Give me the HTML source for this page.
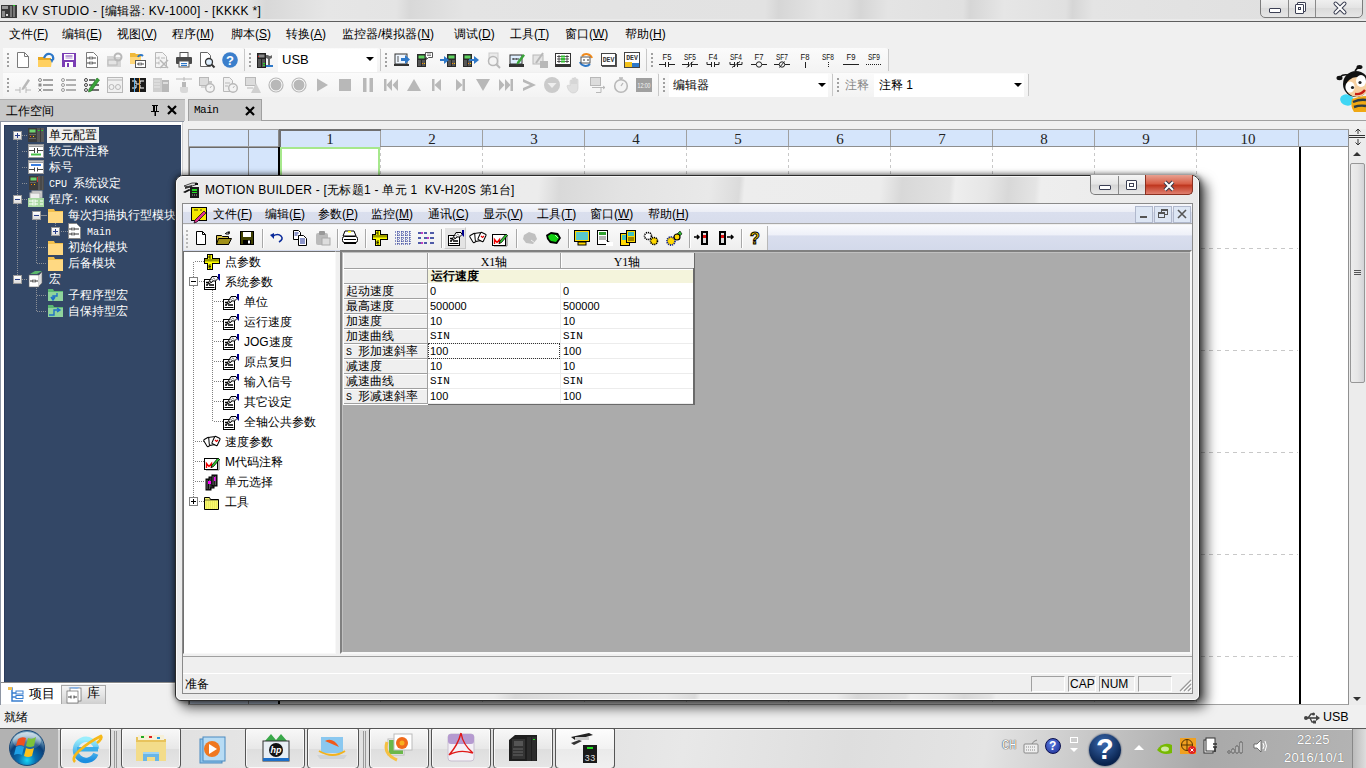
<!DOCTYPE html>
<html><head><meta charset="utf-8">
<style>
*{box-sizing:border-box;margin:0;padding:0}
html,body{width:1366px;height:768px;overflow:hidden;background:#f0f0f0;font-family:"Liberation Sans",sans-serif;font-size:12px;color:#000}
body{position:relative}
.a{position:absolute}
.t{position:absolute;white-space:nowrap;line-height:1}
svg{overflow:visible}
u{text-decoration:underline;text-underline-offset:1px}
m{font-family:'Liberation Mono',monospace;font-size:10px}
</style></head><body>

<div class="a" style="left:0;top:0;width:1366px;height:21px;background:linear-gradient(92deg,#e2e2e2 0%,#e6e6e6 18%,#d8d8d8 19.5%,#e6e6e6 24%,#e4e4e4 29%,#d8d8d8 30%,#e4e4e4 34%,#e2e2e2 56%,#d6d6d6 57%,#e4e4e4 60%,#e0e0e0 62%,#d6d6d6 63%,#e4e4e4 65%,#e0e0e0 70.5%,#d6d6d6 71%,#e6e6e6 73.5%,#e0e0e0 78%,#d6d6d6 78.5%,#e4e4e4 80%,#dedede 100%)"></div>
<div class="a" style="left:0;top:19px;width:1366px;height:2px;background:#eaeaea"></div>
<div class="a" style="left:0;top:21px;width:1366px;height:1px;background:#5e5e5e"></div>
<svg class="a" style="left:1px;top:3px" width="16" height="16" viewBox="0 0 16 16">
<rect x="0" y="2" width="16" height="13" fill="#3a3a3a"/>
<rect x="1" y="3" width="6" height="3" fill="#9a9a9a"/><rect x="1" y="8" width="3" height="6" fill="#8a8a8a"/>
<rect x="9" y="3" width="2" height="11" fill="#777"/><rect x="12" y="3" width="2" height="11" fill="#777"/>
<rect x="12" y="2" width="2" height="1" fill="#2c2"/><rect x="5" y="11" width="2" height="2" fill="#ddd"/></svg>
<div class="t" style="left:22px;top:5px;font-size:12px;color:#000;letter-spacing:.3px">KV STUDIO - [编辑器: KV-1000] - [KKKK *]</div>
<div class="a" style="left:1260px;top:-3px;width:103px;height:21px;border:1px solid #7c7c7c;border-radius:0 0 5px 5px;background:linear-gradient(#f2f2f2,#e4e4e4 50%,#dadada 51%,#e6e6e6)"></div>
<div class="a" style="left:1288px;top:0;width:1px;height:17px;background:#8a8a8a"></div>
<div class="a" style="left:1315px;top:0;width:1px;height:17px;background:#8a8a8a"></div>
<div class="a" style="left:1269px;top:8px;width:12px;height:5px;border:1px solid #3c4054;border-radius:1px;background:#fff"></div>
<div class="a" style="left:1297px;top:2px;width:9px;height:10px;border:1px solid #3c4054;border-radius:1px;background:#fff"></div>
<div class="a" style="left:1295px;top:4px;width:9px;height:10px;border:1px solid #3c4054;border-radius:1px;background:#fff"></div>
<div class="a" style="left:1298px;top:7px;width:3px;height:3px;border:1px solid #3c4054"></div>
<svg class="a" style="left:1333px;top:2px" width="14" height="12" viewBox="0 0 14 12"><path d="M2.5 1.5l9 9M11.5 1.5l-9 9" stroke="#3c4054" stroke-width="4" stroke-linecap="round"/><path d="M2.5 1.5l9 9M11.5 1.5l-9 9" stroke="#fff" stroke-width="2" stroke-linecap="round"/></svg>
<div class="t" style="left:9px;top:28px;font-size:12px">文件(<u>F</u>)</div>
<div class="t" style="left:62px;top:28px;font-size:12px">编辑(<u>E</u>)</div>
<div class="t" style="left:117px;top:28px;font-size:12px">视图(<u>V</u>)</div>
<div class="t" style="left:172px;top:28px;font-size:12px">程序(<u>M</u>)</div>
<div class="t" style="left:231px;top:28px;font-size:12px">脚本(<u>S</u>)</div>
<div class="t" style="left:286px;top:28px;font-size:12px">转换(<u>A</u>)</div>
<div class="t" style="left:342px;top:28px;font-size:12px">监控器/模拟器(<u>N</u>)</div>
<div class="t" style="left:454px;top:28px;font-size:12px">调试(<u>D</u>)</div>
<div class="t" style="left:510px;top:28px;font-size:12px">工具(<u>T</u>)</div>
<div class="t" style="left:565px;top:28px;font-size:12px">窗口(<u>W</u>)</div>
<div class="t" style="left:625px;top:28px;font-size:12px">帮助(<u>H</u>)</div>
<div class="a" style="left:3px;top:48px;width:241px;height:24px;background:linear-gradient(#fbfbfb,#f3f3f3);border-radius:0 3px 3px 0"></div>
<div class="a" style="left:7px;top:53px;width:2px;height:2px;background:#a0a0a0"></div>
<div class="a" style="left:7px;top:57px;width:2px;height:2px;background:#a0a0a0"></div>
<div class="a" style="left:7px;top:61px;width:2px;height:2px;background:#a0a0a0"></div>
<div class="a" style="left:7px;top:65px;width:2px;height:2px;background:#a0a0a0"></div>
<div class="a" style="left:244px;top:49px;width:1px;height:22px;background:#c8c8c8"></div>
<svg class="a" style="left:15px;top:52px" width="16" height="16" viewBox="0 0 16 16"><path d="M2.5 0.5h7l4 4v11h-11z" fill="#fff" stroke="#7a7a7a"/><path d="M9.5 0.5v4h4" fill="none" stroke="#7a7a7a"/></svg>
<svg class="a" style="left:38px;top:52px" width="16" height="16" viewBox="0 0 16 16"><path d="M0 5h6l1 1h6v9H0z" fill="#e8a820"/><path d="M0 8h14l-1 7H0z" fill="#ffd060"/><path d="M6 6q2-5 6-4t3 6" stroke="#2e78c8" stroke-width="2.2" fill="none"/><path d="M12 7h4l-2 4z" fill="#2e78c8"/></svg>
<svg class="a" style="left:61px;top:52px" width="16" height="16" viewBox="0 0 16 16"><rect x="1" y="1" width="14" height="14" fill="#7a3db4"/><rect x="3" y="2" width="10" height="6" fill="#fff"/><rect x="4.5" y="3.5" width="7" height="1" fill="#7a3db4"/><rect x="4.5" y="5.5" width="7" height="1" fill="#b090d0"/><rect x="4" y="10" width="8" height="5" fill="#fff"/><rect x="6" y="11" width="2" height="4" fill="#7a3db4"/></svg>
<svg class="a" style="left:84px;top:52px" width="16" height="16" viewBox="0 0 16 16"><path d="M2.5 0.5h7l4 4v11h-11z" fill="#fff" stroke="#7a7a7a"/><path d="M3 6h3M8 6h4M3 11h3M8 11h4M6 4.5v3M8 4.5v3M6 9.5v3M8 9.5v3" stroke="#444" fill="none"/></svg>
<svg class="a" style="left:107px;top:52px" width="16" height="16" viewBox="0 0 16 16"><path d="M0 4h6l1 1h7v10H0z" fill="#d6d6d6"/><rect x="1" y="8" width="9" height="5" fill="#e4e4e4" stroke="#b8b8b8"/><circle cx="11" cy="5" r="3.5" fill="none" stroke="#b8b8b8" stroke-width="2"/></svg>
<svg class="a" style="left:130px;top:52px" width="16" height="16" viewBox="0 0 16 16"><path d="M0 1h5l1 1h5v10H0z" fill="#f0b93a"/><path d="M0 5h11v7H0z" fill="#ffd77a"/><rect x="5.5" y="8.5" width="10" height="7" fill="#fff" stroke="#555"/><path d="M7 12h2M11 12h3M9 10.5v3M11 10.5v3" stroke="#444"/><path d="M8 5a3 3 0 0 1 5-1" stroke="#2e78c8" stroke-width="2" fill="none"/></svg>
<svg class="a" style="left:153px;top:52px" width="16" height="16" viewBox="0 0 16 16"><path d="M2.5 0.5h7l4 4v11h-11z" fill="#f4f4f4" stroke="#b8b8b8"/><path d="M3 6h3M8 6h4M3 11h3M6 4.5v3M6 9.5v3" stroke="#b8b8b8"/><path d="M7 8l8 8M15 8l-8 8" stroke="#b8b8b8" stroke-width="1.5"/></svg>
<svg class="a" style="left:176px;top:52px" width="16" height="16" viewBox="0 0 16 16"><rect x="4" y="0.5" width="8" height="5" fill="#fff" stroke="#555"/><rect x="0" y="5" width="16" height="7" rx="1" fill="#4a4a4a"/><rect x="3" y="9" width="10" height="6" fill="#fff" stroke="#555"/><rect x="5" y="11" width="6" height="1.2" fill="#2e78c8"/><rect x="5" y="13" width="6" height="1" fill="#2e78c8"/></svg>
<svg class="a" style="left:199px;top:52px" width="16" height="16" viewBox="0 0 16 16"><path d="M1.5 0.5h7l3 3v11h-10z" fill="#fff" stroke="#666"/><circle cx="10" cy="10" r="3.5" fill="#dff0ff" stroke="#333" stroke-width="1.3"/><path d="M12.5 12.5l3 3" stroke="#333" stroke-width="2"/></svg>
<svg class="a" style="left:222px;top:52px" width="16" height="16" viewBox="0 0 16 16"><circle cx="8" cy="8" r="7.8" fill="#3b7fcc"/><text x="8" y="13" font-size="13" font-weight="bold" fill="#fff" text-anchor="middle" font-family="Liberation Sans">?</text></svg>
<div class="a" style="left:245px;top:48px;width:135px;height:24px;background:linear-gradient(#fbfbfb,#f3f3f3);border-radius:0 3px 3px 0"></div>
<div class="a" style="left:249px;top:53px;width:2px;height:2px;background:#a0a0a0"></div>
<div class="a" style="left:249px;top:57px;width:2px;height:2px;background:#a0a0a0"></div>
<div class="a" style="left:249px;top:61px;width:2px;height:2px;background:#a0a0a0"></div>
<div class="a" style="left:249px;top:65px;width:2px;height:2px;background:#a0a0a0"></div>
<div class="a" style="left:380px;top:49px;width:1px;height:22px;background:#c8c8c8"></div>
<svg class="a" style="left:257px;top:52px" width="16" height="16" viewBox="0 0 16 16"><rect x="0" y="1" width="9" height="15" fill="#222"/><rect x="1.5" y="2.5" width="6" height="3" fill="#888"/><rect x="1" y="4" width="1" height="1" fill="#e22"/><rect x="1" y="7" width="3" height="8" fill="#555"/><rect x="5" y="7" width="3" height="8" fill="#555"/><rect x="6" y="11" width="2" height="1" fill="#2d2"/><rect x="6" y="13" width="2" height="1" fill="#2d2"/><path d="M11 3a3 3 0 0 0 4 0v3l-2 1v7h-2V7l-2-1V3z" fill="#666"/><rect x="9" y="13" width="7" height="2" fill="#2e78c8"/></svg>
<div class="a" style="left:278px;top:49px;width:99px;height:23px;background:#fff"></div>
<div class="t" style="left:282px;top:53px;font-size:13px">USB</div>
<div class="a" style="left:366px;top:57px;width:0;height:0;border-left:4px solid transparent;border-right:4px solid transparent;border-top:4px solid #000"></div>
<div class="a" style="left:381px;top:48px;width:265px;height:24px;background:linear-gradient(#fbfbfb,#f3f3f3);border-radius:0 3px 3px 0"></div>
<div class="a" style="left:385px;top:53px;width:2px;height:2px;background:#a0a0a0"></div>
<div class="a" style="left:385px;top:57px;width:2px;height:2px;background:#a0a0a0"></div>
<div class="a" style="left:385px;top:61px;width:2px;height:2px;background:#a0a0a0"></div>
<div class="a" style="left:385px;top:65px;width:2px;height:2px;background:#a0a0a0"></div>
<div class="a" style="left:646px;top:49px;width:1px;height:22px;background:#c8c8c8"></div>
<svg class="a" style="left:394px;top:52px" width="16" height="16" viewBox="0 0 16 16"><rect x="1" y="2" width="12" height="10" fill="#eef6ff" stroke="#333"/><rect x="0" y="12" width="15" height="2" fill="#333"/><path d="M3 5h2M3 7h2M3 9h2" stroke="#555"/><path d="M7 6h4V3l5 4.5-5 4.5V9H7z" fill="#2e78c8"/></svg>
<svg class="a" style="left:417px;top:52px" width="16" height="16" viewBox="0 0 16 16"><rect x="0" y="2" width="9" height="13" fill="#2a2a2a"/><rect x="1.5" y="3.5" width="6" height="3" fill="#5fd35f"/><rect x="1" y="8" width="3" height="6" fill="#555"/><rect x="5" y="8" width="3" height="6" fill="#555"/><rect x="5" y="11" width="1" height="1" fill="#f80"/><rect x="7" y="11" width="1" height="1" fill="#fc0"/><path d="M8.5 0.5h7v5h-4l-2 2v-2h-1z" fill="#fff" stroke="#555"/><path d="M10 2h4M10 3.5h4" stroke="#888"/></svg>
<svg class="a" style="left:440px;top:52px" width="16" height="16" viewBox="0 0 16 16"><rect x="7" y="2" width="9" height="13" fill="#2a2a2a"/><rect x="8.5" y="3.5" width="6" height="3" fill="#5fd35f"/><rect x="8" y="8" width="3" height="6" fill="#555"/><rect x="12" y="8" width="3" height="6" fill="#555"/><rect x="12" y="11" width="1" height="1" fill="#f80"/><rect x="14" y="11" width="1" height="1" fill="#fc0"/><path d="M0 7h4V4l5 4-5 4V9H0z" fill="#2e78c8"/></svg>
<svg class="a" style="left:463px;top:52px" width="16" height="16" viewBox="0 0 16 16"><rect x="0" y="2" width="9" height="13" fill="#2a2a2a"/><rect x="1.5" y="3.5" width="6" height="3" fill="#5fd35f"/><rect x="1" y="8" width="3" height="6" fill="#555"/><rect x="5" y="8" width="3" height="6" fill="#555"/><rect x="5" y="11" width="1" height="1" fill="#f80"/><rect x="7" y="11" width="1" height="1" fill="#fc0"/><path d="M6 7h5V4l5 4-5 4V9H6z" fill="#2e78c8"/></svg>
<svg class="a" style="left:486px;top:52px" width="16" height="16" viewBox="0 0 16 16"><rect x="3" y="1" width="9" height="11" fill="#eaeaea" stroke="#ccc"/><circle cx="7" cy="9" r="4.5" fill="#f4f4f4" stroke="#b8b8b8" stroke-width="1.5"/><path d="M10 12l4 4" stroke="#b8b8b8" stroke-width="2"/></svg>
<svg class="a" style="left:509px;top:52px" width="16" height="16" viewBox="0 0 16 16"><rect x="1" y="3" width="12" height="9" fill="#dfefff" stroke="#333"/><rect x="0" y="12" width="15" height="3" fill="#333"/><path d="M3 7h2M7 7h3M5 6v2M7 6v2" stroke="#333"/><path d="M8 10l6-8 2 1.5-6 8-2.5 1z" fill="#3aa33a"/></svg>
<svg class="a" style="left:532px;top:52px" width="16" height="16" viewBox="0 0 16 16"><rect x="1" y="3" width="10" height="9" fill="#e4e4e4" stroke="#b8b8b8"/><rect x="8" y="9" width="8" height="7" fill="#b8b8b8"/><path d="M4 11l7-10" stroke="#b8b8b8" stroke-width="2"/></svg>
<svg class="a" style="left:555px;top:52px" width="16" height="16" viewBox="0 0 16 16"><rect x="0.5" y="1.5" width="15" height="11" fill="#fff" stroke="#333"/><rect x="0" y="13" width="16" height="2" fill="#333"/><path d="M4 3v8M12 3v8M2 4.5h12M2 7h12M2 9.5h12" stroke="#333" stroke-width=".8"/><rect x="6" y="3.5" width="4" height="2" fill="#3b3"/><rect x="6" y="6" width="4" height="2" fill="#3b3"/><rect x="6" y="8.5" width="4" height="2" fill="#3b3"/></svg>
<svg class="a" style="left:578px;top:52px" width="16" height="16" viewBox="0 0 16 16"><path d="M4 4a6 6 0 0 1 10 2" stroke="#f08a1c" stroke-width="2" fill="none"/><path d="M12 12a6 6 0 0 1-10-2" stroke="#2e78c8" stroke-width="2" fill="none"/><rect x="3" y="5" width="9" height="6" fill="#fff" stroke="#555"/><path d="M5 8h2M9 8h2" stroke="#333"/></svg>
<svg class="a" style="left:601px;top:52px" width="16" height="16" viewBox="0 0 16 16"><rect x="1.5" y="2.5" width="14" height="12" fill="#fff" stroke="#555"/><rect x="0.5" y="1.5" width="14" height="12" fill="#fff" stroke="#444"/><text x="7.5" y="9.5" font-size="6.5" font-weight="bold" fill="#333" text-anchor="middle" font-family="Liberation Mono">DEV</text></svg>
<svg class="a" style="left:624px;top:52px" width="16" height="16" viewBox="0 0 16 16"><rect x="0.5" y="0.5" width="15" height="15" fill="#fff" stroke="#444"/><text x="8" y="8" font-size="6.5" font-weight="bold" fill="#333" text-anchor="middle" font-family="Liberation Mono">DEV</text><rect x="1" y="10" width="7" height="5" fill="#f3c21b"/><rect x="8" y="11" width="7" height="4" fill="#2e78c8"/></svg>
<div class="a" style="left:647px;top:48px;width:241px;height:24px;background:linear-gradient(#fbfbfb,#f3f3f3);border-radius:0 3px 3px 0"></div>
<div class="a" style="left:651px;top:53px;width:2px;height:2px;background:#a0a0a0"></div>
<div class="a" style="left:651px;top:57px;width:2px;height:2px;background:#a0a0a0"></div>
<div class="a" style="left:651px;top:61px;width:2px;height:2px;background:#a0a0a0"></div>
<div class="a" style="left:651px;top:65px;width:2px;height:2px;background:#a0a0a0"></div>
<div class="a" style="left:888px;top:49px;width:1px;height:22px;background:#c8c8c8"></div>
<svg class="a" style="left:655px;top:52px" width="24" height="17" viewBox="0 0 24 17"><text x="7.5" y="7.5" font-size="9" fill="#111" font-family="Liberation Sans" textLength="9" lengthAdjust="spacingAndGlyphs">F5</text><path d="M4 12.5h6M14 12.5h6M10.5 10v5M13.5 10v5" stroke="#222"/></svg>
<svg class="a" style="left:678px;top:52px" width="24" height="17" viewBox="0 0 24 17"><text x="6.0" y="7.5" font-size="9" fill="#111" font-family="Liberation Sans" textLength="12" lengthAdjust="spacingAndGlyphs">SF5</text><path d="M4 12.5h6M14 12.5h6M10.5 10v5M13.5 10v5M9 15.5l6-6" stroke="#222"/></svg>
<svg class="a" style="left:701px;top:52px" width="24" height="17" viewBox="0 0 24 17"><text x="7.5" y="7.5" font-size="9" fill="#111" font-family="Liberation Sans" textLength="9" lengthAdjust="spacingAndGlyphs">F4</text><path d="M6 10v2.5h4M14 12.5h4V10M10.5 10v5M13.5 10v5" stroke="#222" fill="none"/></svg>
<svg class="a" style="left:724px;top:52px" width="24" height="17" viewBox="0 0 24 17"><text x="6.0" y="7.5" font-size="9" fill="#111" font-family="Liberation Sans" textLength="12" lengthAdjust="spacingAndGlyphs">SF4</text><path d="M6 10v2.5h4M14 12.5h4V10M10.5 10v5M13.5 10v5M8 15.5l8-6" stroke="#222" fill="none"/></svg>
<svg class="a" style="left:747px;top:52px" width="24" height="17" viewBox="0 0 24 17"><text x="7.5" y="7.5" font-size="9" fill="#111" font-family="Liberation Sans" textLength="9" lengthAdjust="spacingAndGlyphs">F7</text><path d="M4 12.5h5M15 12.5h5" stroke="#222"/><circle cx="12" cy="12.5" r="2.7" fill="none" stroke="#222"/></svg>
<svg class="a" style="left:770px;top:52px" width="24" height="17" viewBox="0 0 24 17"><text x="6.0" y="7.5" font-size="9" fill="#111" font-family="Liberation Sans" textLength="12" lengthAdjust="spacingAndGlyphs">SF7</text><path d="M4 12.5h5M15 12.5h5M9.5 15.5l5-6" stroke="#222"/><circle cx="12" cy="12.5" r="2.7" fill="none" stroke="#222"/></svg>
<svg class="a" style="left:793px;top:52px" width="24" height="17" viewBox="0 0 24 17"><text x="7.5" y="7.5" font-size="9" fill="#111" font-family="Liberation Sans" textLength="9" lengthAdjust="spacingAndGlyphs">F8</text><path d="M12.5 10v6" stroke="#222"/></svg>
<svg class="a" style="left:816px;top:52px" width="24" height="17" viewBox="0 0 24 17"><text x="6.0" y="7.5" font-size="9" fill="#111" font-family="Liberation Sans" textLength="12" lengthAdjust="spacingAndGlyphs">SF8</text><path d="M12.5 10v6" stroke="#222" stroke-dasharray="1 1"/></svg>
<svg class="a" style="left:839px;top:52px" width="24" height="17" viewBox="0 0 24 17"><text x="7.5" y="7.5" font-size="9" fill="#111" font-family="Liberation Sans" textLength="9" lengthAdjust="spacingAndGlyphs">F9</text><path d="M4 12.5h16" stroke="#222"/></svg>
<svg class="a" style="left:862px;top:52px" width="24" height="17" viewBox="0 0 24 17"><text x="6.0" y="7.5" font-size="9" fill="#111" font-family="Liberation Sans" textLength="12" lengthAdjust="spacingAndGlyphs">SF9</text><path d="M4 12.5h16" stroke="#222" stroke-dasharray="1 1"/></svg>
<div class="a" style="left:3px;top:73px;width:655px;height:24px;background:linear-gradient(#fbfbfb,#f3f3f3);border-radius:0 3px 3px 0"></div>
<div class="a" style="left:7px;top:78px;width:2px;height:2px;background:#a0a0a0"></div>
<div class="a" style="left:7px;top:82px;width:2px;height:2px;background:#a0a0a0"></div>
<div class="a" style="left:7px;top:86px;width:2px;height:2px;background:#a0a0a0"></div>
<div class="a" style="left:7px;top:90px;width:2px;height:2px;background:#a0a0a0"></div>
<div class="a" style="left:658px;top:74px;width:1px;height:22px;background:#c8c8c8"></div>
<svg class="a" style="left:15px;top:77px" width="16" height="16" viewBox="0 0 16 16"><path d="M0 13h5M11 13h5M5 10v6M11 10v6" stroke="#b8b8b8"/><path d="M7 11l6-9 2 1.5-6 9-2.5.5z" fill="#b8b8b8"/></svg>
<svg class="a" style="left:38px;top:77px" width="16" height="16" viewBox="0 0 16 16"><path d="M5 3h10M5 8h10M5 13h10" stroke="#888" stroke-width="1.6"/><circle cx="2" cy="3" r="1.5" fill="none" stroke="#888"/><rect x="0.5" y="6.5" width="3" height="3" fill="#888"/><path d="M0.5 11.5l3 3M3.5 11.5l-3 3" stroke="#888"/></svg>
<svg class="a" style="left:61px;top:77px" width="16" height="16" viewBox="0 0 16 16"><path d="M5 3h10M5 8h10M5 13h10" stroke="#999" stroke-width="1.6"/><circle cx="2" cy="3" r="1.5" fill="none" stroke="#999"/><circle cx="2" cy="8" r="1.5" fill="none" stroke="#999"/><circle cx="2" cy="13" r="1.5" fill="none" stroke="#999"/></svg>
<svg class="a" style="left:84px;top:77px" width="16" height="16" viewBox="0 0 16 16"><path d="M5 3h6M5 8h10M5 13h10" stroke="#444" stroke-width="1.6"/><circle cx="2" cy="3" r="1.5" fill="none" stroke="#444"/><circle cx="2" cy="8" r="1.5" fill="none" stroke="#444"/><circle cx="2" cy="13" r="1.5" fill="none" stroke="#444"/><path d="M5 12l8-11 2.5 2-8 11-3 1z" fill="#3aa33a" stroke="#1c6a1c" stroke-width=".6"/></svg>
<svg class="a" style="left:107px;top:77px" width="16" height="16" viewBox="0 0 16 16"><rect x="0.5" y="0.5" width="15" height="15" fill="#f0f0f0" stroke="#b8b8b8"/><circle cx="4.5" cy="10" r="2.5" fill="none" stroke="#b8b8b8"/><circle cx="11" cy="10" r="2.5" fill="none" stroke="#b8b8b8"/><path d="M1 3h14" stroke="#b8b8b8"/></svg>
<svg class="a" style="left:130px;top:77px" width="16" height="16" viewBox="0 0 16 16"><rect x="0" y="1" width="16" height="14" fill="#1a1a1a"/><path d="M2 4h4v3h4V4h4M2 11h4v-3M10 8v3h4" stroke="#fff" fill="none"/><rect x="4" y="1" width="1" height="14" fill="#5ab0f0"/><rect x="9" y="1" width="1" height="14" fill="#f0a030"/></svg>
<svg class="a" style="left:153px;top:77px" width="16" height="16" viewBox="0 0 16 16"><rect x="0" y="1" width="9" height="14" fill="#cfcfcf"/><rect x="9" y="3" width="7" height="12" fill="#b8b8b8"/><path d="M1 4h6M1 7h6M1 10h6" stroke="#e8e8e8"/><rect x="10" y="5" width="5" height="2" fill="#ddd"/></svg>
<svg class="a" style="left:176px;top:77px" width="16" height="16" viewBox="0 0 16 16"><path d="M0 2h16M8 0v4" stroke="#b8b8b8"/><rect x="6" y="5" width="4" height="5" fill="#b8b8b8"/><path d="M4 10h8v4a2 2 0 0 1-2 2H7a3 3 0 0 1-3-3z" fill="#d8d8d8"/></svg>
<svg class="a" style="left:199px;top:77px" width="16" height="16" viewBox="0 0 16 16"><rect x="0.5" y="0.5" width="9" height="8" fill="#dcdcdc" stroke="#b8b8b8"/><path d="M2 10h6" stroke="#b8b8b8"/><circle cx="11" cy="11" r="4.3" fill="#f4f4f4" stroke="#b8b8b8" stroke-width="1.4"/><path d="M11 11l1.5-2" stroke="#b8b8b8"/><path d="M9 5h4" stroke="#b8b8b8" stroke-width="1.5"/></svg>
<svg class="a" style="left:222px;top:77px" width="16" height="16" viewBox="0 0 16 16"><path d="M1.5 0.5h6l3 3v11h-9z" fill="#f0f0f0" stroke="#b8b8b8"/><path d="M3 6h5M3 9h3" stroke="#b8b8b8"/><circle cx="11" cy="11" r="4.3" fill="#f4f4f4" stroke="#b8b8b8" stroke-width="1.4"/><path d="M11 11l1.5-2" stroke="#b8b8b8"/></svg>
<svg class="a" style="left:245px;top:77px" width="16" height="16" viewBox="0 0 16 16"><rect x="0.5" y="0.5" width="10" height="8" fill="#dcdcdc" stroke="#b8b8b8"/><path d="M2 11h6" stroke="#b8b8b8"/><path d="M11 6l5 10H6z" fill="#d0d0d0"/></svg>
<svg class="a" style="left:268px;top:77px" width="16" height="16" viewBox="0 0 16 16"><circle cx="8" cy="8" r="7" fill="#fff" stroke="#b8b8b8" stroke-width="1.2"/><circle cx="8" cy="8" r="5.5" fill="#b8b8b8"/></svg>
<svg class="a" style="left:291px;top:77px" width="16" height="16" viewBox="0 0 16 16"><circle cx="8" cy="8" r="7" fill="#fff" stroke="#b8b8b8" stroke-width="1.2"/><circle cx="8" cy="8" r="5.5" fill="#b8b8b8"/></svg>
<svg class="a" style="left:314px;top:77px" width="16" height="16" viewBox="0 0 16 16"><path d="M3 1.5l11 6.5-11 6.5z" fill="#b8b8b8"/></svg>
<svg class="a" style="left:337px;top:77px" width="16" height="16" viewBox="0 0 16 16"><rect x="2" y="2" width="12" height="12" fill="#b8b8b8"/></svg>
<svg class="a" style="left:360px;top:77px" width="16" height="16" viewBox="0 0 16 16"><rect x="3" y="1" width="3.5" height="14" fill="#b8b8b8"/><rect x="9.5" y="1" width="3.5" height="14" fill="#b8b8b8"/></svg>
<svg class="a" style="left:383px;top:77px" width="16" height="16" viewBox="0 0 16 16"><rect x="1" y="2" width="2.5" height="12" fill="#b8b8b8"/><path d="M9 2L3.5 8 9 14zM15 2L9.5 8 15 14z" fill="#b8b8b8"/></svg>
<svg class="a" style="left:406px;top:77px" width="16" height="16" viewBox="0 0 16 16"><path d="M8 2l7 12H1z" fill="#b8b8b8"/></svg>
<svg class="a" style="left:429px;top:77px" width="16" height="16" viewBox="0 0 16 16"><rect x="3" y="2" width="2.5" height="12" fill="#b8b8b8"/><path d="M12 2L5.5 8 12 14z" fill="#b8b8b8"/></svg>
<svg class="a" style="left:452px;top:77px" width="16" height="16" viewBox="0 0 16 16"><rect x="10.5" y="2" width="2.5" height="12" fill="#b8b8b8"/><path d="M4 2l6.5 6L4 14z" fill="#b8b8b8"/></svg>
<svg class="a" style="left:475px;top:77px" width="16" height="16" viewBox="0 0 16 16"><path d="M1 2h14L8 14z" fill="#b8b8b8"/></svg>
<svg class="a" style="left:498px;top:77px" width="16" height="16" viewBox="0 0 16 16"><rect x="12.5" y="2" width="2.5" height="12" fill="#b8b8b8"/><path d="M1 2l5.5 6L1 14zM7 2l5.5 6L7 14z" fill="#b8b8b8"/></svg>
<svg class="a" style="left:521px;top:77px" width="16" height="16" viewBox="0 0 16 16"><path d="M2 2l13 6-13 6v-3l7-3-7-3z" fill="#b8b8b8"/></svg>
<svg class="a" style="left:544px;top:77px" width="16" height="16" viewBox="0 0 16 16"><circle cx="8" cy="8" r="8" fill="#cbcbcb"/><path d="M3.5 6h9L8 11z" fill="#eee"/></svg>
<svg class="a" style="left:567px;top:77px" width="16" height="16" viewBox="0 0 16 16"><path d="M3 9V4a1 1 0 0 1 2 0v3V2a1 1 0 0 1 2 0v5V1.5a1 1 0 0 1 2 0V7V3a1 1 0 0 1 2 0v8c0 3-2 5-5 5-2 0-4-2-5-4L0 9c0-1 2-1 3 0z" fill="#e0e0e0" stroke="#cdcdcd" stroke-width=".6"/></svg>
<svg class="a" style="left:590px;top:77px" width="16" height="16" viewBox="0 0 16 16"><rect x="0.5" y="0.5" width="10" height="8" fill="#dcdcdc" stroke="#b8b8b8"/><path d="M2 10.5h9" stroke="#b8b8b8"/><path d="M6 15.5h5v-5h4M13 9l2 1.5-2 1.5" stroke="#b8b8b8" fill="none"/></svg>
<svg class="a" style="left:613px;top:77px" width="16" height="16" viewBox="0 0 16 16"><circle cx="8" cy="9" r="6.3" fill="#f4f4f4" stroke="#b8b8b8" stroke-width="1.6"/><path d="M6 1h4M8 1v2M8 9l2-3" stroke="#b8b8b8" stroke-width="1.3"/></svg>
<svg class="a" style="left:636px;top:77px" width="16" height="16" viewBox="0 0 16 16"><rect x="0" y="1" width="16" height="14" fill="#a0a0a0"/><text x="1.5" y="11" font-size="8" fill="#f4f4f4" font-family="Liberation Sans" textLength="13" lengthAdjust="spacingAndGlyphs">12:00</text></svg>
<div class="a" style="left:659px;top:73px;width:173px;height:24px;background:linear-gradient(#fbfbfb,#f3f3f3);border-radius:0 3px 3px 0"></div>
<div class="a" style="left:663px;top:78px;width:2px;height:2px;background:#a0a0a0"></div>
<div class="a" style="left:663px;top:82px;width:2px;height:2px;background:#a0a0a0"></div>
<div class="a" style="left:663px;top:86px;width:2px;height:2px;background:#a0a0a0"></div>
<div class="a" style="left:663px;top:90px;width:2px;height:2px;background:#a0a0a0"></div>
<div class="a" style="left:832px;top:74px;width:1px;height:22px;background:#c8c8c8"></div>
<div class="a" style="left:669px;top:74px;width:159px;height:23px;background:#fff"></div>
<div class="t" style="left:673px;top:79px;font-size:12px">编辑器</div>
<div class="a" style="left:818px;top:83px;width:0;height:0;border-left:4px solid transparent;border-right:4px solid transparent;border-top:4px solid #000"></div>
<div class="a" style="left:833px;top:73px;width:195px;height:24px;background:linear-gradient(#fbfbfb,#f3f3f3);border-radius:0 3px 3px 0"></div>
<div class="a" style="left:837px;top:78px;width:2px;height:2px;background:#a0a0a0"></div>
<div class="a" style="left:837px;top:82px;width:2px;height:2px;background:#a0a0a0"></div>
<div class="a" style="left:837px;top:86px;width:2px;height:2px;background:#a0a0a0"></div>
<div class="a" style="left:837px;top:90px;width:2px;height:2px;background:#a0a0a0"></div>
<div class="a" style="left:1028px;top:74px;width:1px;height:22px;background:#c8c8c8"></div>
<div class="t" style="left:845px;top:79px;font-size:12px;color:#888">注释</div>
<div class="a" style="left:874px;top:74px;width:150px;height:23px;background:#fff"></div>
<div class="t" style="left:879px;top:79px;font-size:12px">注释 1</div>
<div class="a" style="left:1014px;top:83px;width:0;height:0;border-left:4px solid transparent;border-right:4px solid transparent;border-top:4px solid #000"></div>
<svg class="a" style="left:1336px;top:62px" width="30" height="52" viewBox="0 0 30 52">
<path d="M12 13q-5-1-8 2" stroke="#111" stroke-width="1.6" fill="none"/><ellipse cx="3.5" cy="16" rx="3" ry="2.2" fill="#111"/>
<path d="M19 9q2-3 4-4" stroke="#111" stroke-width="1.6" fill="none"/><ellipse cx="23.5" cy="5" rx="3" ry="2" fill="#111"/>
<ellipse cx="11" cy="38" rx="7" ry="5.5" fill="#3fd6f4" transform="rotate(15 11 38)"/>
<path d="M16 37q8-3 14-3v16h-12q-4-6-2-13z" fill="#f0a814"/><path d="M17 40q7-3 13-2M18 45q6-2 12-1" stroke="#2a3a44" stroke-width="2.4" fill="none"/>
<circle cx="20" cy="22" r="13" fill="#111"/><ellipse cx="21" cy="25" rx="11" ry="10" fill="#f6cfa0"/>
<ellipse cx="14" cy="25" rx="4.6" ry="5.6" fill="#fff"/><ellipse cx="25" cy="19" rx="5" ry="6" fill="#fff"/>
<circle cx="16.5" cy="25.5" r="1.6" fill="#222"/><circle cx="24" cy="20.5" r="1.6" fill="#222"/>
<path d="M19 32q6 1 10-4" stroke="#c81e14" stroke-width="2.4" fill="none"/>
</svg>
<div class="a" style="left:188px;top:99px;width:74px;height:22px;background:#c8c8c8;border:1px solid #a0a0a0;border-bottom:none"></div>
<div class="a" style="left:262px;top:120px;width:1104px;height:1px;background:#a0a0a0"></div>
<div class="t" style="left:194px;top:105px;font-size:11px;font-family:'Liberation Mono',monospace;letter-spacing:-0.5px">Main</div>
<svg class="a" style="left:245px;top:106px" width="10" height="10" viewBox="0 0 10 10"><path d="M1 1l8 8M9 1l-8 8" stroke="#000" stroke-width="2.2"/></svg>
<div class="a" style="left:188px;top:129px;width:1161px;height:576px;background:#fff;border:1px solid #a0a0a0;border-right:1px solid #909090"></div>
<div class="a" style="left:189px;top:130px;width:1159px;height:17px;background:#d5e5fb;border-bottom:1px solid #8e8e8e"></div>
<div class="a" style="left:189px;top:146px;width:89px;height:558px;background:#d5e5fb;border-left:1px solid #707070"></div>
<div class="a" style="left:248px;top:130px;width:1px;height:574px;background:#8a8a8a"></div>
<div class="a" style="left:278px;top:130px;width:1px;height:17px;background:#8a8a8a"></div>
<div class="a" style="left:189px;top:146px;width:89px;height:1px;background:#a0a0a0"></div><div class="a" style="left:189px;top:147px;width:89px;height:1px;background:#6a6a6a"></div>
<div class="a" style="left:278px;top:147px;width:2px;height:557px;background:#000"></div>
<div class="a" style="left:1299px;top:147px;width:2px;height:557px;background:#000"></div>
<div class="a" style="left:380px;top:130px;width:1px;height:16px;background:#a0a0a0"></div>
<div class="t" style="left:279px;top:132px;width:102px;text-align:center;font-family:'Liberation Serif',serif;font-size:15px;color:#222">1</div>
<div class="a" style="left:380px;top:147px;width:1px;height:557px;background:repeating-linear-gradient(#c8c8c8 0 3px,transparent 3px 6px)"></div>
<div class="a" style="left:482px;top:130px;width:1px;height:16px;background:#a0a0a0"></div>
<div class="t" style="left:381px;top:132px;width:102px;text-align:center;font-family:'Liberation Serif',serif;font-size:15px;color:#222">2</div>
<div class="a" style="left:482px;top:147px;width:1px;height:557px;background:repeating-linear-gradient(#c8c8c8 0 3px,transparent 3px 6px)"></div>
<div class="a" style="left:584px;top:130px;width:1px;height:16px;background:#a0a0a0"></div>
<div class="t" style="left:483px;top:132px;width:102px;text-align:center;font-family:'Liberation Serif',serif;font-size:15px;color:#222">3</div>
<div class="a" style="left:584px;top:147px;width:1px;height:557px;background:repeating-linear-gradient(#c8c8c8 0 3px,transparent 3px 6px)"></div>
<div class="a" style="left:686px;top:130px;width:1px;height:16px;background:#a0a0a0"></div>
<div class="t" style="left:585px;top:132px;width:102px;text-align:center;font-family:'Liberation Serif',serif;font-size:15px;color:#222">4</div>
<div class="a" style="left:686px;top:147px;width:1px;height:557px;background:repeating-linear-gradient(#c8c8c8 0 3px,transparent 3px 6px)"></div>
<div class="a" style="left:788px;top:130px;width:1px;height:16px;background:#a0a0a0"></div>
<div class="t" style="left:687px;top:132px;width:102px;text-align:center;font-family:'Liberation Serif',serif;font-size:15px;color:#222">5</div>
<div class="a" style="left:788px;top:147px;width:1px;height:557px;background:repeating-linear-gradient(#c8c8c8 0 3px,transparent 3px 6px)"></div>
<div class="a" style="left:890px;top:130px;width:1px;height:16px;background:#a0a0a0"></div>
<div class="t" style="left:789px;top:132px;width:102px;text-align:center;font-family:'Liberation Serif',serif;font-size:15px;color:#222">6</div>
<div class="a" style="left:890px;top:147px;width:1px;height:557px;background:repeating-linear-gradient(#c8c8c8 0 3px,transparent 3px 6px)"></div>
<div class="a" style="left:992px;top:130px;width:1px;height:16px;background:#a0a0a0"></div>
<div class="t" style="left:891px;top:132px;width:102px;text-align:center;font-family:'Liberation Serif',serif;font-size:15px;color:#222">7</div>
<div class="a" style="left:992px;top:147px;width:1px;height:557px;background:repeating-linear-gradient(#c8c8c8 0 3px,transparent 3px 6px)"></div>
<div class="a" style="left:1094px;top:130px;width:1px;height:16px;background:#a0a0a0"></div>
<div class="t" style="left:993px;top:132px;width:102px;text-align:center;font-family:'Liberation Serif',serif;font-size:15px;color:#222">8</div>
<div class="a" style="left:1094px;top:147px;width:1px;height:557px;background:repeating-linear-gradient(#c8c8c8 0 3px,transparent 3px 6px)"></div>
<div class="a" style="left:1196px;top:130px;width:1px;height:16px;background:#a0a0a0"></div>
<div class="t" style="left:1095px;top:132px;width:102px;text-align:center;font-family:'Liberation Serif',serif;font-size:15px;color:#222">9</div>
<div class="a" style="left:1196px;top:147px;width:1px;height:557px;background:repeating-linear-gradient(#c8c8c8 0 3px,transparent 3px 6px)"></div>
<div class="a" style="left:1298px;top:130px;width:1px;height:16px;background:#a0a0a0"></div>
<div class="t" style="left:1197px;top:132px;width:102px;text-align:center;font-family:'Liberation Serif',serif;font-size:15px;color:#222">10</div>
<div class="a" style="left:279px;top:129px;width:102px;height:2px;background:#707070"></div>
<div class="a" style="left:279px;top:129px;width:2px;height:18px;background:#707070"></div>
<div class="a" style="left:281px;top:146px;width:99px;height:1px;background:#d5e5fb"></div>
<div class="a" style="left:281px;top:248px;width:1017px;height:1px;background:repeating-linear-gradient(90deg,#c8c8c8 0 4px,transparent 4px 8px)"></div>
<div class="a" style="left:281px;top:350px;width:1017px;height:1px;background:repeating-linear-gradient(90deg,#c8c8c8 0 4px,transparent 4px 8px)"></div>
<div class="a" style="left:281px;top:452px;width:1017px;height:1px;background:repeating-linear-gradient(90deg,#c8c8c8 0 4px,transparent 4px 8px)"></div>
<div class="a" style="left:281px;top:554px;width:1017px;height:1px;background:repeating-linear-gradient(90deg,#c8c8c8 0 4px,transparent 4px 8px)"></div>
<div class="a" style="left:281px;top:656px;width:1017px;height:1px;background:repeating-linear-gradient(90deg,#c8c8c8 0 4px,transparent 4px 8px)"></div>
<div class="a" style="left:280px;top:147px;width:100px;height:101px;border:2px solid #a6e88c"></div>
<div class="a" style="left:1349px;top:129px;width:17px;height:576px;background:#ececec"></div>
<svg class="a" style="left:1349px;top:128px" width="17" height="18" viewBox="0 0 17 18"><path d="M0 7.5h16M0 9.5h16" stroke="#333" stroke-width="1.2"/><path d="M9 1v5M9 11v6" stroke="#333"/><path d="M6.5 3.5l2.5-2.5 2.5 2.5M6.5 14.5l2.5 2.5 2.5-2.5" stroke="#333" fill="none"/></svg>
<div class="a" style="left:1353px;top:152px;width:0;height:0;border-left:4px solid transparent;border-right:4px solid transparent;border-bottom:4px solid #333"></div>
<div class="a" style="left:1350px;top:163px;width:15px;height:220px;border:1px solid #979797;border-radius:2px;background:linear-gradient(90deg,#ededed,#e6e6e6 50%,#d4d4d8)"></div>
<div class="a" style="left:1354px;top:270px;width:7px;height:1px;background:#555"></div>
<div class="a" style="left:1354px;top:272px;width:7px;height:1px;background:#555"></div>
<div class="a" style="left:1354px;top:274px;width:7px;height:1px;background:#555"></div>
<div class="a" style="left:1353px;top:697px;width:0;height:0;border-left:4px solid transparent;border-right:4px solid transparent;border-top:4px solid #333"></div>
<div class="t" style="left:4px;top:711px;font-size:12px">就绪</div>
<svg class="a" style="left:1304px;top:711px" width="16" height="16" viewBox="0 0 16 16"><path d="M2 7h11" stroke="#444" stroke-width="1.6"/><path d="M12 4l4 3-4 3z" fill="#444"/><circle cx="2" cy="7" r="2" fill="#444"/><path d="M4 7l3-4h2M6 7l2 4h2" stroke="#444" stroke-width="1.3" fill="none"/><circle cx="9.5" cy="3" r="1.5" fill="#444"/><rect x="9" y="9.5" width="3" height="3" fill="#444"/></svg>
<div class="t" style="left:1323px;top:711px;font-size:12.5px">USB</div>
<div class="a" style="left:0;top:99px;width:185px;height:22px;background:#c8c8c8;border-top:1px solid #b0b0b0"></div>
<div class="t" style="left:6px;top:105px;font-size:12px">工作空间</div>
<svg class="a" style="left:150px;top:104px" width="10" height="12" viewBox="0 0 10 12"><path d="M3 1h5v1H7v5h2v1H1V7h2V2H2V1z" fill="#000"/><rect x="4.5" y="8" width="1.5" height="4" fill="#000"/><rect x="5" y="2" width="1" height="5" fill="#c8c8c8"/></svg>
<svg class="a" style="left:167px;top:105px" width="10" height="10" viewBox="0 0 10 10"><path d="M1 1l8 8M9 1l-8 8" stroke="#000" stroke-width="2.2"/></svg>
<div class="a" style="left:1px;top:121px;width:182px;height:563px;background:#fff;border-right:1px solid #d0d0d0"></div>
<div class="a" style="left:0;top:121px;width:184px;height:1px;background:#8e96a4"></div>
<div class="a" style="left:0;top:121px;width:1px;height:584px;background:#8e96a4"></div>
<div class="a" style="left:4px;top:125px;width:177px;height:558px;background:#334766;border-top:1px solid #26375a;border-left:1px solid #2a3a5a"></div>
<div class="a" style="left:1px;top:682px;width:182px;height:1px;background:#8a8a8a"></div>
<div class="a" style="left:17px;top:140px;width:1px;height:139px;background:repeating-linear-gradient(#8c9096 0 1px,transparent 1px 2px)"></div>
<div class="a" style="left:36px;top:220px;width:1px;height:44px;background:repeating-linear-gradient(#8c9096 0 1px,transparent 1px 2px)"></div>
<div class="a" style="left:55px;top:221px;width:1px;height:7px;background:repeating-linear-gradient(#8c9096 0 1px,transparent 1px 2px)"></div>
<div class="a" style="left:36px;top:284px;width:1px;height:28px;background:repeating-linear-gradient(#8c9096 0 1px,transparent 1px 2px)"></div>
<div class="a" style="left:22px;top:135px;width:6px;height:1px;background:repeating-linear-gradient(90deg,#8c9096 0 1px,transparent 1px 2px)"></div>
<div class="a" style="left:22px;top:151px;width:6px;height:1px;background:repeating-linear-gradient(90deg,#8c9096 0 1px,transparent 1px 2px)"></div>
<div class="a" style="left:22px;top:167px;width:6px;height:1px;background:repeating-linear-gradient(90deg,#8c9096 0 1px,transparent 1px 2px)"></div>
<div class="a" style="left:22px;top:183px;width:6px;height:1px;background:repeating-linear-gradient(90deg,#8c9096 0 1px,transparent 1px 2px)"></div>
<div class="a" style="left:22px;top:199px;width:6px;height:1px;background:repeating-linear-gradient(90deg,#8c9096 0 1px,transparent 1px 2px)"></div>
<div class="a" style="left:22px;top:279px;width:6px;height:1px;background:repeating-linear-gradient(90deg,#8c9096 0 1px,transparent 1px 2px)"></div>
<div class="a" style="left:37px;top:215px;width:10px;height:1px;background:repeating-linear-gradient(90deg,#8c9096 0 1px,transparent 1px 2px)"></div>
<div class="a" style="left:37px;top:247px;width:10px;height:1px;background:repeating-linear-gradient(90deg,#8c9096 0 1px,transparent 1px 2px)"></div>
<div class="a" style="left:37px;top:263px;width:10px;height:1px;background:repeating-linear-gradient(90deg,#8c9096 0 1px,transparent 1px 2px)"></div>
<div class="a" style="left:37px;top:295px;width:10px;height:1px;background:repeating-linear-gradient(90deg,#8c9096 0 1px,transparent 1px 2px)"></div>
<div class="a" style="left:37px;top:311px;width:10px;height:1px;background:repeating-linear-gradient(90deg,#8c9096 0 1px,transparent 1px 2px)"></div>
<div class="a" style="left:42px;top:215px;width:6px;height:1px;background:repeating-linear-gradient(90deg,#8c9096 0 1px,transparent 1px 2px)"></div>
<div class="a" style="left:61px;top:231px;width:7px;height:1px;background:repeating-linear-gradient(90deg,#8c9096 0 1px,transparent 1px 2px)"></div>
<div class="a" style="left:13px;top:131px;width:9px;height:9px;border:1px solid #9a9a9a;background:linear-gradient(#fff,#dcdcdc)"></div><div class="a" style="left:15px;top:135px;width:5px;height:1px;background:#2a3f8a"></div><div class="a" style="left:17px;top:133px;width:1px;height:5px;background:#2a3f8a"></div>
<div class="a" style="left:13px;top:195px;width:9px;height:9px;border:1px solid #9a9a9a;background:linear-gradient(#fff,#dcdcdc)"></div><div class="a" style="left:15px;top:199px;width:5px;height:1px;background:#2a3f8a"></div>
<div class="a" style="left:32px;top:211px;width:9px;height:9px;border:1px solid #9a9a9a;background:linear-gradient(#fff,#dcdcdc)"></div><div class="a" style="left:34px;top:215px;width:5px;height:1px;background:#2a3f8a"></div>
<div class="a" style="left:51px;top:227px;width:9px;height:9px;border:1px solid #9a9a9a;background:linear-gradient(#fff,#dcdcdc)"></div><div class="a" style="left:53px;top:231px;width:5px;height:1px;background:#2a3f8a"></div><div class="a" style="left:55px;top:229px;width:1px;height:5px;background:#2a3f8a"></div>
<div class="a" style="left:13px;top:275px;width:9px;height:9px;border:1px solid #9a9a9a;background:linear-gradient(#fff,#dcdcdc)"></div><div class="a" style="left:15px;top:279px;width:5px;height:1px;background:#2a3f8a"></div>
<svg class="a" style="left:28px;top:127px" width="16" height="16" viewBox="0 0 16 16"><rect x="0" y="1" width="16" height="14" fill="#3c3c3c"/><rect x="1.5" y="2.5" width="6" height="3" fill="#6fd36f"/><rect x="9" y="1" width="3" height="14" fill="#585858"/><rect x="13" y="1" width="3" height="14" fill="#585858"/><rect x="10" y="3" width="1.5" height="1" fill="#2d2"/><rect x="13.5" y="3" width="1.5" height="1" fill="#2d2"/><rect x="2" y="9" width="1" height="1" fill="#f60"/><rect x="5" y="9" width="1" height="1" fill="#fc0"/><rect x="1" y="7" width="7" height="1" fill="#666"/><rect x="1" y="11" width="7" height="1" fill="#666"/></svg>
<svg class="a" style="left:28px;top:143px" width="16" height="16" viewBox="0 0 16 16"><rect x="0" y="1" width="16" height="14" fill="#9a9a9a"/><rect x="1" y="4" width="14" height="10" fill="#fff"/><rect x="1" y="2" width="14" height="1" fill="#c8c8c8"/><path d="M1 7.5h5M10 7.5h5M6.5 5v5M9.5 5v5" stroke="#444"/><rect x="3" y="10.5" width="10" height="2" fill="#4ac14a"/></svg>
<svg class="a" style="left:28px;top:159px" width="16" height="16" viewBox="0 0 16 16"><rect x="0" y="1" width="16" height="14" fill="#9a9a9a"/><rect x="1" y="4" width="14" height="10" fill="#fff"/><rect x="1" y="2" width="14" height="1" fill="#c8c8c8"/><rect x="3" y="5" width="10" height="2" fill="#3b7fe0"/><path d="M1 10.5h5M10 10.5h5M6.5 8.5v4M9.5 8.5v4" stroke="#444"/></svg>
<svg class="a" style="left:28px;top:175px" width="16" height="16" viewBox="0 0 16 16"><rect x="1" y="1" width="15" height="14" fill="#3c3c3c"/><rect x="2.5" y="2.5" width="6" height="3" fill="#6fd36f"/><rect x="10" y="1" width="2.5" height="14" fill="#585858"/><rect x="13.5" y="1" width="2" height="14" fill="#585858"/><rect x="9" y="2" width="1" height="5" fill="#c33"/><rect x="3" y="9" width="1" height="1" fill="#f60"/><rect x="6" y="9" width="1" height="1" fill="#fc0"/><rect x="2" y="7" width="6" height="1" fill="#666"/></svg>
<svg class="a" style="left:28px;top:191px" width="16" height="16" viewBox="0 0 16 16"><rect x="4" y="0" width="10" height="7" fill="#ddd" stroke="#aaa"/><rect x="2" y="2" width="10" height="7" fill="#eee" stroke="#aaa"/><rect x="0" y="7" width="16" height="9" fill="#a8d8a0"/><path d="M1 10h4M7 10h3M12 10h3M1 13h4M7 13h3M12 13h3M5 8.5v3M7 8.5v3M5 11.5v3M7 11.5v3" stroke="#fff"/></svg>
<svg class="a" style="left:48px;top:208px" width="16" height="16" viewBox="0 0 16 16"><path d="M0 1h6l1 2h8v12H0z" fill="#f2c04e"/><path d="M0 4h15v11H0z" fill="#ffd982"/></svg>
<svg class="a" style="left:68px;top:223px" width="16" height="16" viewBox="0 0 16 16"><path d="M0.5 0.5h8l4 4v11H0.5z" fill="#fff" stroke="#888"/><path d="M1 6h3M6 6h5M1 11h3M6 11h5M4 4.5v3M6 4.5v3M4 9.5v3M6 9.5v3" stroke="#333"/></svg>
<svg class="a" style="left:48px;top:240px" width="16" height="16" viewBox="0 0 16 16"><path d="M0 1h6l1 2h8v12H0z" fill="#f2c04e"/><path d="M0 4h15v11H0z" fill="#ffd982"/></svg>
<svg class="a" style="left:48px;top:256px" width="16" height="16" viewBox="0 0 16 16"><path d="M0 1h6l1 2h8v12H0z" fill="#f2c04e"/><path d="M0 4h15v11H0z" fill="#ffd982"/></svg>
<svg class="a" style="left:28px;top:271px" width="16" height="16" viewBox="0 0 16 16"><path d="M2 3l5-3h7l-5 3z" fill="#5cb86c"/><rect x="1" y="4" width="10" height="12" fill="#fff" stroke="#666" stroke-width=".6"/><path d="M11 4l3-3v11l-3 3" fill="#ddd" stroke="#666" stroke-width=".6"/><path d="M2 10h3M7 10h3M5 8.5v3M7 8.5v3" stroke="#333"/></svg>
<svg class="a" style="left:48px;top:288px" width="16" height="16" viewBox="0 0 16 16"><path d="M0 1h5l1 2h9v10H0z" fill="#5ab873"/><path d="M0 4h15v9H0z" fill="#8fd39b"/><path d="M9 5v3H5v3M3 9l2 3 2-3" stroke="#1e6fc8" stroke-width="1.4" fill="none"/></svg>
<svg class="a" style="left:48px;top:304px" width="16" height="16" viewBox="0 0 16 16"><path d="M0 1h5l1 2h9v10H0z" fill="#5ab873"/><path d="M0 4h15v9H0z" fill="#8fd39b"/><path d="M1 11h5V6h5M9 4l3 2-3 2" stroke="#1e6fc8" stroke-width="1.4" fill="none"/></svg>
<div class="a" style="left:47px;top:127px;width:52px;height:16px;background:#f0f0f0"></div>
<div class="t" style="left:49px;top:129px;font-size:12px;color:#000;max-width:127px;overflow:hidden">单元配置</div>
<div class="t" style="left:49px;top:145px;font-size:12px;color:#fff;max-width:127px;overflow:hidden">软元件注释</div>
<div class="t" style="left:49px;top:161px;font-size:12px;color:#fff;max-width:127px;overflow:hidden">标号</div>
<div class="t" style="left:49px;top:177px;font-size:12px;color:#fff;max-width:127px;overflow:hidden"><m>CPU </m>系统设定</div>
<div class="t" style="left:49px;top:193px;font-size:12px;color:#fff;max-width:127px;overflow:hidden">程序<m>: KKKK</m></div>
<div class="t" style="left:68px;top:209px;font-size:12px;color:#fff;max-width:108px;overflow:hidden">每次扫描执行型模块</div>
<div class="t" style="left:87px;top:225px;font-size:12px;color:#fff;max-width:89px;overflow:hidden"><m>Main</m></div>
<div class="t" style="left:68px;top:241px;font-size:12px;color:#fff;max-width:108px;overflow:hidden">初始化模块</div>
<div class="t" style="left:68px;top:257px;font-size:12px;color:#fff;max-width:108px;overflow:hidden">后备模块</div>
<div class="t" style="left:49px;top:273px;font-size:12px;color:#fff;max-width:127px;overflow:hidden">宏</div>
<div class="t" style="left:68px;top:289px;font-size:12px;color:#fff;max-width:108px;overflow:hidden">子程序型宏</div>
<div class="t" style="left:68px;top:305px;font-size:12px;color:#fff;max-width:108px;overflow:hidden">自保持型宏</div>
<div class="a" style="left:1px;top:684px;width:183px;height:21px;background:#f0f0f0"></div>
<div class="a" style="left:1px;top:683px;width:60px;height:21px;background:#fff"></div>
<div class="a" style="left:61px;top:685px;width:45px;height:19px;background:linear-gradient(#f4f4f4,#e4e4e4 50%,#cfcfcf);border:1px solid #a8a8a8;border-bottom:none"></div>
<svg class="a" style="left:8px;top:687px" width="16" height="16" viewBox="0 0 16 16"><path d="M1 1h3v13h11M4 6h4M4 10h4" stroke="#3a7fd0" fill="none" stroke-width="1.5"/><rect x="8" y="4" width="7" height="3" fill="none" stroke="#3a7fd0"/><rect x="8" y="8.5" width="7" height="3" fill="none" stroke="#3a7fd0"/><rect x="0" y="0" width="4" height="3" fill="#f2c04e"/></svg>
<div class="t" style="left:29px;top:687px;font-size:13px">项目</div>
<svg class="a" style="left:66px;top:687px" width="16" height="16" viewBox="0 0 16 16"><rect x="4" y="1" width="11" height="13" fill="#fff" stroke="#666" stroke-width=".7"/><rect x="1" y="4" width="11" height="12" fill="#fff" stroke="#666" stroke-width=".7"/><path d="M2 1l3-1h9l-3 2z" fill="#8ab4e6"/><path d="M2 10h3M8 10h3M5 8.5v3M8 8.5v3" stroke="#444"/></svg>
<div class="t" style="left:87px;top:686px;font-size:13px">库</div>
<div class="a" style="left:0;top:728px;width:1366px;height:40px;background:linear-gradient(100deg,#cfcfcf 0%,#dedede 8%,#e6e6e6 20%,#dcdcdc 35%,#e8e8e8 50%,#dedede 62%,#e4e4e4 72%,#c6c6c6 80%,#a9a9a9 88%,#b4b4b4 100%)"></div>
<div class="a" style="left:0;top:728px;width:1366px;height:1px;background:#5a5a5a"></div>
<div class="a" style="left:0;top:729px;width:1366px;height:1px;background:#f4f4f4"></div>
<div class="a" style="left:0;top:729px;width:58px;height:39px;background:#b2b2b2"></div>
<svg class="a" style="left:9px;top:730px" width="36" height="36" viewBox="0 0 36 36"><defs><radialGradient id="og" cx="50%" cy="85%" r="70%"><stop offset="0" stop-color="#19d6f6"/><stop offset=".35" stop-color="#0a6fb0"/><stop offset=".75" stop-color="#0b3f78"/><stop offset="1" stop-color="#6a9ab8"/></radialGradient><linearGradient id="oh" x1="0" y1="0" x2="0" y2="1"><stop offset="0" stop-color="#fff" stop-opacity=".7"/><stop offset="1" stop-color="#fff" stop-opacity="0"/></linearGradient></defs><circle cx="18" cy="18" r="17.5" fill="url(#og)" stroke="#1e4a78" stroke-width="1"/><ellipse cx="18" cy="11" rx="14" ry="9" fill="url(#oh)"/><path d="M9 9q4-3 8-1l-2 8q-4-2-8 0z" fill="#f0501e"/><path d="M19 8q4 2 8-1l-2 9q-4 2-8 0z" fill="#7cc23a"/><path d="M7 17q4-2 8 0l-2 8q-4-2-8 0z" fill="#1ea0e6"/><path d="M17 18q4 2 8 0l-2 8q-4 2-8 0z" fill="#fcc21a"/></svg>
<div class="a" style="left:60px;top:728px;width:51px;height:41px;border:1px solid #555;border-radius:2px 2px 4px 4px;background:linear-gradient(#f8f8f8,#e8e8e8 50%,#dedede 51%,#e6e6e6);box-shadow:inset 0 0 0 1px rgba(255,255,255,.7)"></div>
<div class="a" style="left:121px;top:728px;width:60px;height:41px;border:1px solid #555;border-radius:2px 2px 4px 4px;background:linear-gradient(#f8f8f8,#e8e8e8 50%,#dedede 51%,#e6e6e6);box-shadow:inset 0 0 0 1px rgba(255,255,255,.7)"></div>
<div class="a" style="left:245px;top:728px;width:60px;height:41px;border:1px solid #555;border-radius:2px 2px 4px 4px;background:linear-gradient(#f8f8f8,#e8e8e8 50%,#dedede 51%,#e6e6e6);box-shadow:inset 0 0 0 1px rgba(255,255,255,.7)"></div>
<div class="a" style="left:307px;top:728px;width:52px;height:41px;border:1px solid #555;border-radius:2px 2px 4px 4px;background:linear-gradient(#f8f8f8,#e8e8e8 50%,#dedede 51%,#e6e6e6);box-shadow:inset 0 0 0 1px rgba(255,255,255,.7)"></div>
<div class="a" style="left:369px;top:728px;width:60px;height:41px;border:1px solid #555;border-radius:2px 2px 4px 4px;background:linear-gradient(#f8f8f8,#e8e8e8 50%,#dedede 51%,#e6e6e6);box-shadow:inset 0 0 0 1px rgba(255,255,255,.7)"></div>
<div class="a" style="left:431px;top:728px;width:60px;height:41px;border:1px solid #555;border-radius:2px 2px 4px 4px;background:linear-gradient(#f8f8f8,#e8e8e8 50%,#dedede 51%,#e6e6e6);box-shadow:inset 0 0 0 1px rgba(255,255,255,.7)"></div>
<div class="a" style="left:493px;top:728px;width:60px;height:41px;border:1px solid #555;border-radius:2px 2px 4px 4px;background:linear-gradient(#f8f8f8,#e8e8e8 50%,#dedede 51%,#e6e6e6);box-shadow:inset 0 0 0 1px rgba(255,255,255,.7)"></div>
<div class="a" style="left:555px;top:728px;width:60px;height:41px;border:1px solid #555;border-radius:2px 2px 4px 4px;background:linear-gradient(#f8f8f8,#e8e8e8 50%,#dedede 51%,#e6e6e6);box-shadow:inset 0 0 0 1px rgba(255,255,255,.7)"></div>
<div class="a" style="left:555px;top:728px;width:60px;height:41px;border:1px solid #555;border-radius:2px 2px 4px 4px;background:linear-gradient(#fdfdfd,#f2f2f2 50%,#eaeaea 51%,#f0f0f0)"></div>
<div class="a" style="left:114px;top:731px;width:1px;height:37px;background:#9a9a9a"></div>
<div class="a" style="left:116px;top:731px;width:1px;height:37px;background:#9a9a9a"></div>
<div class="a" style="left:363px;top:731px;width:1px;height:37px;background:#9a9a9a"></div>
<div class="a" style="left:365px;top:731px;width:1px;height:37px;background:#9a9a9a"></div>
<svg class="a" style="left:70px;top:732px" width="32" height="32" viewBox="0 0 32 32"><defs><linearGradient id="ie" x1="0" y1="0" x2="0" y2="1"><stop offset="0" stop-color="#9aeefc"/><stop offset="1" stop-color="#1c8ee0"/></linearGradient></defs><path d="M25.8 21.8A10.5 10.5 0 1 1 26.5 17" stroke="url(#ie)" stroke-width="5.5" fill="none"/><rect x="7" y="15" width="21" height="4.5" fill="#3aaeea"/><path d="M5 30q-4-4 5-12t21-14q2 2-4 7" stroke="#f6b91a" stroke-width="2.6" fill="none"/></svg>
<svg class="a" style="left:135px;top:732px" width="32" height="32" viewBox="0 0 32 32"><path d="M1 5h12l2 2h16v22H1z" fill="#e8c35c"/><rect x="3" y="3" width="26" height="5" fill="#f6f0d8"/><rect x="6" y="4" width="3" height="2" fill="#2a2"/><rect x="14" y="4" width="3" height="2" fill="#d22"/><rect x="22" y="5" width="3" height="2" fill="#29d"/><path d="M1 10h30v19H1z" fill="#f3dc8a"/><path d="M8 29v-8h16v8h-4v-4h-8v4z" fill="#6ab6e6"/><rect x="8" y="20" width="16" height="2" fill="#9fd4f4"/></svg>
<svg class="a" style="left:198px;top:735px" width="32" height="32" viewBox="0 0 32 32"><rect x="2" y="4" width="22" height="24" fill="#8cc4ec" stroke="#4a8ac0"/><rect x="5" y="2" width="22" height="24" fill="#b8dcf4" stroke="#4a8ac0"/><circle cx="14" cy="14" r="8" fill="#f07820"/><path d="M11 9l8 5-8 5z" fill="#fff"/></svg>
<svg class="a" style="left:260px;top:731px" width="32" height="32" viewBox="0 0 32 32"><path d="M5 10l6-7 5 6 5-6 6 7" fill="#3aa84a"/><rect x="3" y="10" width="26" height="20" fill="#e8eef4" stroke="#333"/><rect x="3" y="27" width="26" height="3" fill="#1c6ec8"/><circle cx="16" cy="19" r="7" fill="#111"/><text x="16" y="22" font-size="9" font-style="italic" font-weight="bold" fill="#fff" text-anchor="middle" font-family="Liberation Sans">hp</text></svg>
<svg class="a" style="left:317px;top:733px" width="32" height="32" viewBox="0 0 32 32"><path d="M4 4h22v16H4z" fill="#8ac8f0"/><path d="M8 8q8-4 14 6" fill="#f05a1a"/><path d="M0 22h30l-3 4H3z" fill="#d0d4d8"/><path d="M2 18q14 8 26 0" stroke="#f3b31c" stroke-width="2" fill="none"/></svg>
<svg class="a" style="left:383px;top:732px" width="32" height="32" viewBox="0 0 32 32"><rect x="5" y="7" width="16" height="16" fill="#fff" stroke="#bbb"/><rect x="6" y="8" width="14" height="14" fill="#6ab84a"/><rect x="11" y="2" width="18" height="16" fill="#fff" stroke="#bbb"/><circle cx="19" cy="11" r="6" fill="#f06a1a"/><circle cx="19" cy="11" r="2.5" fill="#f8b020"/><path d="M4 10q-4 12 10 18" stroke="#f6c040" stroke-width="3" fill="none"/></svg>
<svg class="a" style="left:445px;top:731px" width="32" height="32" viewBox="0 0 32 32"><rect x="3" y="3" width="26" height="27" rx="3" fill="#f4f0f6" stroke="#c8c0d0"/><rect x="3" y="3" width="26" height="10" rx="3" fill="#b59ad0"/><path d="M16 2q-3 12-12 22M16 2q2 12 12 20M4 24q10-6 24-2" stroke="#e01818" stroke-width="1.4" fill="none"/></svg>
<svg class="a" style="left:507px;top:732px" width="32" height="32" viewBox="0 0 32 32"><path d="M2 8l6-5h22v26H2z" fill="#1e1e1e"/><rect x="5" y="7" width="13" height="20" fill="#333"/><rect x="7" y="9" width="9" height="5" fill="#555"/><rect x="20" y="5" width="4" height="24" fill="#2c2c2c"/><rect x="25" y="5" width="4" height="24" fill="#2c2c2c"/><rect x="26" y="7" width="2" height="1" fill="#2d2"/><path d="M6 17h10M6 20h10M6 23h10" stroke="#666"/></svg>
<svg class="a" style="left:569px;top:731px" width="32" height="32" viewBox="0 0 32 32"><path d="M2 6l18-4 4 2-18 5z" fill="#222"/><path d="M2 12l8-3 3 1-8 4z" fill="#333"/><rect x="6" y="6" width="14" height="3" fill="#ccc"/><rect x="14" y="14" width="14" height="18" fill="#1a1a1a"/><rect x="18" y="16" width="6" height="2" fill="#2d2"/><text x="21" y="30" font-size="9" fill="#ddd" text-anchor="middle" font-family="Liberation Mono">33</text></svg>
<div class="t" style="left:1002px;top:740px;font-size:12px;color:#fff;font-family:'Liberation Mono',monospace;text-shadow:0 0 1px #333,0 0 1px #333">CH</div>
<svg class="a" style="left:1023px;top:739px" width="16" height="16" viewBox="0 0 16 16"><rect x="1" y="5" width="14" height="9" rx="1" fill="#eee" stroke="#888"/><path d="M3 8h10M3 11h10" stroke="#888" stroke-dasharray="1 1"/><path d="M9 5q1-3 5-4" stroke="#888" fill="none"/></svg>
<div class="a" style="left:1045px;top:738px;width:16px;height:16px;border-radius:50%;background:radial-gradient(circle at 40% 35%,#5a7ae0,#1a2a90);border:1px solid #0a1050"></div>
<div class="t" style="left:1049px;top:740px;font-size:12px;font-weight:bold;color:#fff">?</div>
<div class="a" style="left:1070px;top:737px;width:8px;height:6px;border:1px solid #fff"></div>
<div class="a" style="left:1070px;top:748px;width:0;height:0;border-left:4px solid transparent;border-right:4px solid transparent;border-top:4px solid #fff"></div>
<div class="a" style="left:1089px;top:734px;width:32px;height:32px;border-radius:50%;background:radial-gradient(circle at 45% 30%,#3a6ab0,#0a2450 70%,#061838);box-shadow:0 0 2px #235"></div>
<div class="t" style="left:1096px;top:735px;font-size:29px;font-weight:bold;color:#fff">?</div>
<div class="a" style="left:1134px;top:745px;width:0;height:0;border-left:5px solid transparent;border-right:5px solid transparent;border-bottom:5px solid #fff"></div>
<svg class="a" style="left:1156px;top:741px" width="16" height="16" viewBox="0 0 16 16"><path d="M1 9q6-9 15-5v8q-9 3-15-3z" fill="#76b900"/><ellipse cx="9" cy="8" rx="4" ry="2.5" fill="#cfe8a0"/></svg>
<svg class="a" style="left:1180px;top:738px" width="16" height="16" viewBox="0 0 16 16"><rect x="0" y="0" width="16" height="16" fill="#f0a020"/><circle cx="7" cy="7" r="5.5" fill="none" stroke="#553300"/><path d="M1.5 7h11M7 1.5v11" stroke="#553300"/><circle cx="12" cy="12" r="4" fill="#e02020"/><path d="M10.5 10.5l3 3M13.5 10.5l-3 3" stroke="#fff"/></svg>
<svg class="a" style="left:1203px;top:738px" width="16" height="16" viewBox="0 0 16 16"><rect x="1" y="2" width="9" height="13" fill="#fff" stroke="#333"/><rect x="3" y="0" width="9" height="13" fill="#fff" stroke="#333"/><path d="M10 6h4M10 9h4M12 9v5" stroke="#333" stroke-width="1.5"/></svg>
<svg class="a" style="left:1227px;top:738px" width="16" height="16" viewBox="0 0 16 16"><path d="M1 15h2v-2H1zM5 15h2v-4H5zM9 15h2V8H9zM13 15h2V4h-2z" fill="#fff" stroke="#444" stroke-width=".8"/></svg>
<svg class="a" style="left:1253px;top:738px" width="16" height="16" viewBox="0 0 16 16"><path d="M1 6h3l4-4v12l-4-4H1z" fill="#fff" stroke="#555" stroke-width=".8"/><path d="M10 5q2 3 0 6M12 3q3 5 0 10" stroke="#fff" fill="none"/></svg>
<div class="t" style="left:1297px;top:733px;font-size:13px;color:#fff;text-shadow:0 0 1px #555">22:25</div>
<div class="t" style="left:1284px;top:751px;font-size:13px;color:#fff;text-shadow:0 0 1px #555;letter-spacing:.3px">2016/10/1</div>
<div class="a" style="left:1352px;top:729px;width:14px;height:39px;background:linear-gradient(90deg,#bbb,#ddd);border-left:1px solid #888"></div>
<div class="a" style="left:175px;top:175px;width:1025px;height:526px;border-radius:8px;box-shadow:0 0 5px 1px rgba(0,0,0,.5),6px 6px 12px 1px rgba(0,0,0,.62)"></div>
<div class="a" style="left:175px;top:175px;width:1025px;height:526px;border:1px solid #2b2b2b;border-radius:8px 8px 6px 6px;background:linear-gradient(95deg,#ebebeb 0%,#ececec 34%,#d9d9d9 36%,#e3e3e3 42%,#e9e9e9 50%,#dbdbdb 52.8%,#ededed 53.3%,#ececec 66%,#d8d8d8 68%,#e2e2e2 72.5%,#eeeeee 73%,#e6e6e6 76%,#d8d8d8 78%,#e4e4e4 80.5%,#eeeeee 81%,#e8e8e8 100%)"></div>
<div class="a" style="left:176px;top:176px;width:1023px;height:524px;border:1px solid rgba(255,255,255,.8);border-radius:7px 7px 5px 5px"></div>
<svg class="a" style="left:183px;top:181px" width="16" height="16" viewBox="0 0 16 16"><path d="M1 5l8-3h5l1 1-9 3z" fill="#ddd" stroke="#222" stroke-width=".8"/><path d="M2 6l7-2v2l-7 2z" fill="#333"/><path d="M0 11l6-3 2 1-6 3z" fill="#111"/><rect x="7" y="6" width="9" height="11" fill="#1a1a1a"/><rect x="9" y="8" width="5" height="2" fill="#2d2"/><rect x="9" y="11" width="5" height="1" fill="#2d2"/><path d="M9 14h1M11 14h1M13 14h1" stroke="#aaa"/><rect x="12" y="2" width="3" height="2" fill="#111"/></svg>
<div class="t" style="left:205px;top:184px;font-size:12px;letter-spacing:.27px">MOTION BUILDER - [无标题1 - 单元 1&nbsp; KV-H20S 第1台]</div>
<div class="a" style="left:1090px;top:175px;width:103px;height:20px;border:1px solid #7a7a7a;border-top:none;border-radius:0 0 5px 5px;background:linear-gradient(#f4f4f4,#e6e6e6 45%,#d6d6d6 55%,#e8e8e8)"></div>
<div class="a" style="left:1145px;top:175px;width:48px;height:20px;border:1px solid #8a3020;border-top:none;border-radius:0 0 5px 0;background:linear-gradient(#e8a090,#d86048 45%,#c03820 55%,#e08070)"></div>
<div class="a" style="left:1118px;top:176px;width:1px;height:18px;background:#8a8a8a"></div>
<div class="a" style="left:1099px;top:185px;width:12px;height:5px;border:1px solid #3c4054;border-radius:1px;background:#fff"></div>
<div class="a" style="left:1126px;top:180px;width:11px;height:10px;border:1px solid #3c4054;border-radius:1px;background:#fff"></div>
<div class="a" style="left:1129px;top:183px;width:5px;height:4px;border:1px solid #3c4054"></div>
<svg class="a" style="left:1163px;top:180px" width="12" height="12" viewBox="0 0 12 12"><path d="M2 2l8 8M10 2l-8 8" stroke="#3a3a4a" stroke-width="4"/><path d="M2 2l8 8M10 2l-8 8" stroke="#fff" stroke-width="2"/></svg>
<div class="a" style="left:182px;top:203px;width:1011px;height:491px;border:1px solid #8a8a8a;background:#f0f0f0"></div>
<div class="a" style="left:183px;top:204px;width:1009px;height:20px;background:linear-gradient(#f6f7fb,#eceef6 40%,#dadfee 41%,#d8ddec);border-bottom:1px solid #a8a8a8"></div>
<svg class="a" style="left:191px;top:207px" width="16" height="16" viewBox="0 0 16 16"><rect x="0.5" y="0.5" width="15" height="13" fill="#f4e800" stroke="#000"/><path d="M4 13l9-9 2 2-9 9-3 1z" fill="#e03090" stroke="#000" stroke-width=".7"/><path d="M3 3h4M9 3h2" stroke="#000" stroke-width=".7"/></svg>
<div class="t" style="left:213px;top:208px;font-size:12px">文件(<u>F</u>)</div>
<div class="t" style="left:265px;top:208px;font-size:12px">编辑(<u>E</u>)</div>
<div class="t" style="left:318px;top:208px;font-size:12px">参数(<u>P</u>)</div>
<div class="t" style="left:371px;top:208px;font-size:12px">监控(<u>M</u>)</div>
<div class="t" style="left:428px;top:208px;font-size:12px">通讯(<u>C</u>)</div>
<div class="t" style="left:483px;top:208px;font-size:12px">显示(<u>V</u>)</div>
<div class="t" style="left:537px;top:208px;font-size:12px">工具(<u>T</u>)</div>
<div class="t" style="left:590px;top:208px;font-size:12px">窗口(<u>W</u>)</div>
<div class="t" style="left:648px;top:208px;font-size:12px">帮助(<u>H</u>)</div>
<div class="a" style="left:1135px;top:206px;width:18px;height:17px;border:1px solid #b0b8cc;background:#dde6f4"></div>
<div class="a" style="left:1154px;top:206px;width:18px;height:17px;border:1px solid #b0b8cc;background:#dde6f4"></div>
<div class="a" style="left:1173px;top:206px;width:18px;height:17px;border:1px solid #b0b8cc;background:#dde6f4"></div>
<div class="a" style="left:1140px;top:216px;width:7px;height:2px;background:#555"></div>
<svg class="a" style="left:1158px;top:209px" width="10" height="10" viewBox="0 0 10 10"><rect x="3.5" y="0.5" width="6" height="5" fill="none" stroke="#555"/><rect x="0.5" y="3.5" width="6" height="5" fill="#dde6f4" stroke="#555"/><path d="M1 4.5h5M4 1.5h5" stroke="#555"/></svg>
<svg class="a" style="left:1177px;top:209px" width="10" height="10" viewBox="0 0 10 10"><path d="M1 1l8 8M9 1l-8 8" stroke="#555" stroke-width="1.6"/></svg>
<div class="a" style="left:183px;top:225px;width:1009px;height:26px;background:linear-gradient(#fafbfd,#eef0f8 38%,#d9deee 42%,#d3d9ea);"></div>
<div class="a" style="left:184px;top:226px;width:584px;height:24px;background:linear-gradient(#fafafa,#eeeeee)"></div>
<div class="a" style="left:186px;top:230px;width:2px;height:2px;background:#b8b8b8"></div>
<div class="a" style="left:186px;top:234px;width:2px;height:2px;background:#b8b8b8"></div>
<div class="a" style="left:186px;top:238px;width:2px;height:2px;background:#b8b8b8"></div>
<div class="a" style="left:186px;top:242px;width:2px;height:2px;background:#b8b8b8"></div>
<div class="a" style="left:186px;top:246px;width:2px;height:2px;background:#b8b8b8"></div>
<div class="a" style="left:444px;top:227px;width:22px;height:22px;background:#e4e4e4;border:1px solid #fafafa;border-right-color:#c8c8c8;border-bottom-color:#c8c8c8"></div>
<svg class="a" style="left:193px;top:230px" width="16" height="16" viewBox="0 0 16 16"><path d="M3.5 1.5h6l3 3v10h-9z" fill="#fff" stroke="#000"/><path d="M9.5 1.5v3h3" stroke="#000" fill="none"/></svg>
<svg class="a" style="left:216px;top:230px" width="16" height="16" viewBox="0 0 16 16"><path d="M0.5 5.5h5l1 1h6v8h-12z" fill="#d8c040" stroke="#000"/><path d="M2.5 8.5h13l-3 6h-12z" fill="#a09018" stroke="#000"/><path d="M9 4q2-3 5-1M13 1v3h-3" stroke="#000" fill="none"/></svg>
<svg class="a" style="left:239px;top:230px" width="16" height="16" viewBox="0 0 16 16"><rect x="1.5" y="1.5" width="13" height="13" fill="#404000" stroke="#000"/><rect x="4" y="2" width="8" height="5" fill="#fff"/><rect x="4" y="10" width="8" height="4" fill="#000"/><rect x="9" y="10.5" width="2" height="3" fill="#fff"/></svg>
<svg class="a" style="left:268px;top:230px" width="16" height="16" viewBox="0 0 16 16"><path d="M5 6q5-3 8 0t-2 6" stroke="#0a2a9a" stroke-width="1.6" fill="none"/><path d="M2 5l4-2v6z" fill="#0a2a9a"/></svg>
<svg class="a" style="left:292px;top:230px" width="16" height="16" viewBox="0 0 16 16"><path d="M1.5 0.5h5l2 2v7h-7z" fill="#fff" stroke="#000"/><path d="M6.5 5.5h5l3 3v7h-8z" fill="#fff" stroke="#000"/><path d="M2.5 3h4M2.5 5h3M8 9h5M8 11h5M8 13h5" stroke="#1a2a90"/></svg>
<svg class="a" style="left:315px;top:230px" width="16" height="16" viewBox="0 0 16 16"><rect x="1" y="3" width="12" height="12" rx="2" fill="#bbb"/><rect x="4" y="1" width="6" height="4" rx="1" fill="#999"/><rect x="7" y="8" width="8" height="7" fill="#ddd" stroke="#aaa"/></svg>
<svg class="a" style="left:342px;top:230px" width="16" height="16" viewBox="0 0 16 16"><path d="M3 1h9l2 5H1z" fill="#fff" stroke="#000"/><rect x="0.5" y="6.5" width="15" height="6" rx="2" fill="#fff" stroke="#000"/><path d="M2 9.5h12" stroke="#000"/><rect x="6" y="1" width="3" height="1.5" fill="#ff0"/><rect x="2" y="12" width="12" height="2" fill="#000"/></svg>
<svg class="a" style="left:372px;top:230px" width="16" height="16" viewBox="0 0 16 16"><path d="M3 0h6v4h7v6H9v6H3v-6H0V4h3z" fill="#000"/><path d="M4 1h4v4h7v4H8v6H4V9H1V5h3z" fill="#ffff00"/><path d="M2 7.5V5M4 7.5V5M6 7.5V5M8 7.5V5M10 7.5V5M12 7.5V5M14 7.5V5" stroke="#000" stroke-width=".8"/><path d="M7 2H5v2h2M7 11H5v3h2M5 12.5h2" stroke="#000" stroke-width=".8" fill="none"/></svg>
<svg class="a" style="left:395px;top:230px" width="16" height="16" viewBox="0 0 16 16"><path d="M0 2h16M0 5h16M0 8h16M0 11h16M0 14h16M3 1v14M7 1v14M11 1v14M15 1v14" stroke="#1a2a90" stroke-dasharray="1 1"/></svg>
<svg class="a" style="left:418px;top:230px" width="16" height="16" viewBox="0 0 16 16"><path d="M0 3h3M6 3h3M12 3h4M0 8h3M6 8h3M12 8h4M0 13h3M6 13h3M12 13h4" stroke="#1a2a90" stroke-width="1.3"/><rect x="3" y="2" width="2" height="2" fill="#c040c0"/><rect x="9" y="7" width="2" height="2" fill="#c040c0"/><rect x="3" y="12" width="2" height="2" fill="#c040c0"/></svg>
<svg class="a" style="left:448px;top:230px" width="16" height="16" viewBox="0 0 16 16"><rect x="0.5" y="5.5" width="11" height="10" fill="#fff" stroke="#000"/><path d="M1.5 13.5h9" stroke="#000"/><path d="M2 8.5h3M2 11h2M5 11h5" stroke="#000" stroke-width="1.3"/><path d="M3.5 10.5L8 2.5h5l1 2-2.5 2.5H9.5z" fill="#fff" stroke="#000"/><path d="M6 7l2 2M7.5 5l2 2M9 3.5l2 2" stroke="#000" stroke-width=".7"/><path d="M14 0h2v7l-2-2z" fill="#000090"/></svg>
<svg class="a" style="left:470px;top:230px" width="16" height="16" viewBox="0 0 16 16"><g stroke="#000" fill="#fff" stroke-width="1"><rect x="1" y="4" width="6" height="8" rx="1" transform="rotate(-30 4 8)"/><rect x="5" y="3" width="6" height="8" rx="1" transform="rotate(-5 8 7)"/><rect x="9" y="3" width="6" height="8" rx="1" transform="rotate(25 12 7)"/></g><path d="M11 6l1.5 1.5L14 6" stroke="#e00000" stroke-width="1.2" fill="none"/></svg>
<svg class="a" style="left:492px;top:230px" width="16" height="16" viewBox="0 0 16 16"><path d="M2 16h13V5" stroke="#777" fill="none"/><rect x="0.5" y="4.5" width="13" height="11" fill="#fff" stroke="#000"/><path d="M2.5 14V9.5l2.5 3 2.5-3V14" stroke="#f00000" stroke-width="1.4" fill="none"/><path d="M8 11l6-7 1.5 1.5-6 7-2.5 1z" fill="#30d030" stroke="#000" stroke-width=".8"/></svg>
<svg class="a" style="left:522px;top:230px" width="16" height="16" viewBox="0 0 16 16"><path d="M2 5l5-3 6 2 2 5-4 5-7-1-3-4z" fill="#c0c0c0"/><path d="M9 10l4 3" stroke="#eee"/></svg>
<svg class="a" style="left:545px;top:230px" width="16" height="16" viewBox="0 0 16 16"><path d="M1 5l5-3 7 1 3 5-4 6-7-1-3-4z" fill="#000"/><path d="M3 6l3-2 6 1 2 3-3 4-5-1-2-2z" fill="#10d010"/><path d="M10 5l3 3" stroke="#afa"/></svg>
<svg class="a" style="left:574px;top:230px" width="16" height="16" viewBox="0 0 16 16"><rect x="0.5" y="0.5" width="15" height="11" fill="#ffd800" stroke="#000"/><rect x="2" y="2" width="12" height="8" fill="#40c0c0"/><path d="M2 3h12M2 5h12M2 7h12M2 9h12" stroke="#a0e0e0" stroke-width=".5"/><rect x="4" y="12" width="8" height="3" fill="#ffd800" stroke="#000"/></svg>
<svg class="a" style="left:597px;top:230px" width="16" height="16" viewBox="0 0 16 16"><rect x="0.5" y="0.5" width="10" height="14" fill="#fff" stroke="#000"/><rect x="2" y="2" width="7" height="3" fill="#30a030"/><path d="M2 7h7M2 9h7" stroke="#000" stroke-width=".6"/><path d="M9 10l6 3-3 1z" fill="#000"/><rect x="9" y="12" width="7" height="4" fill="#fff"/></svg>
<svg class="a" style="left:620px;top:230px" width="16" height="16" viewBox="0 0 16 16"><rect x="0.5" y="3.5" width="9" height="12" fill="#ffd800" stroke="#000"/><rect x="2" y="5" width="6" height="5" fill="#40c0c0"/><rect x="6.5" y="0.5" width="9" height="12" fill="#ffd800" stroke="#000"/><rect x="8" y="2" width="6" height="4" fill="#40c0c0"/><path d="M8 8h6M8 10h6" stroke="#000" stroke-width=".8"/></svg>
<svg class="a" style="left:643px;top:230px" width="16" height="16" viewBox="0 0 16 16"><circle cx="5" cy="6" r="3.5" fill="#fff" stroke="#000" stroke-dasharray="1.2 .8" stroke-width="1.6"/><circle cx="11" cy="11" r="3.5" fill="#ffd800" stroke="#000" stroke-dasharray="1.2 .8" stroke-width="1.6"/></svg>
<svg class="a" style="left:666px;top:230px" width="16" height="16" viewBox="0 0 16 16"><circle cx="5" cy="11" r="4" fill="#ffd800" stroke="#1a2a90" stroke-dasharray="1.2 .8" stroke-width="1.8"/><path d="M8 7l6-6 2 3-5 4z" fill="#30c030" stroke="#000" stroke-width=".6"/><circle cx="11" cy="7" r="3" fill="#ffd800" stroke="#000" stroke-width="1.2"/></svg>
<svg class="a" style="left:694px;top:230px" width="16" height="16" viewBox="0 0 16 16"><path d="M0 7h5M3 5l2 2-2 2" stroke="#000" stroke-width="1.5" fill="none"/><rect x="7" y="1" width="7" height="14" fill="#000"/><rect x="9" y="3" width="3" height="10" fill="#ddd"/><rect x="9" y="5" width="3" height="3" fill="#e01010"/></svg>
<svg class="a" style="left:718px;top:230px" width="16" height="16" viewBox="0 0 16 16"><rect x="1" y="1" width="7" height="14" fill="#000"/><rect x="3" y="3" width="3" height="10" fill="#ddd"/><rect x="3" y="5" width="3" height="3" fill="#e01010"/><path d="M9 7h6M13 5l2 2-2 2" stroke="#000" stroke-width="1.5" fill="none"/></svg>
<svg class="a" style="left:747px;top:230px" width="16" height="16" viewBox="0 0 16 16"><text x="8" y="14" font-size="16" font-weight="bold" fill="#ffd800" stroke="#000" stroke-width="1" text-anchor="middle" font-family="Liberation Sans">?</text></svg>
<div class="a" style="left:262px;top:229px;width:1px;height:19px;background:#a8a8a8"></div><div class="a" style="left:263px;top:229px;width:1px;height:19px;background:#fff"></div>
<div class="a" style="left:337px;top:229px;width:1px;height:19px;background:#a8a8a8"></div><div class="a" style="left:338px;top:229px;width:1px;height:19px;background:#fff"></div>
<div class="a" style="left:365px;top:229px;width:1px;height:19px;background:#a8a8a8"></div><div class="a" style="left:366px;top:229px;width:1px;height:19px;background:#fff"></div>
<div class="a" style="left:441px;top:229px;width:1px;height:19px;background:#a8a8a8"></div><div class="a" style="left:442px;top:229px;width:1px;height:19px;background:#fff"></div>
<div class="a" style="left:516px;top:229px;width:1px;height:19px;background:#a8a8a8"></div><div class="a" style="left:517px;top:229px;width:1px;height:19px;background:#fff"></div>
<div class="a" style="left:568px;top:229px;width:1px;height:19px;background:#a8a8a8"></div><div class="a" style="left:569px;top:229px;width:1px;height:19px;background:#fff"></div>
<div class="a" style="left:689px;top:229px;width:1px;height:19px;background:#a8a8a8"></div><div class="a" style="left:690px;top:229px;width:1px;height:19px;background:#fff"></div>
<div class="a" style="left:741px;top:229px;width:1px;height:19px;background:#a8a8a8"></div><div class="a" style="left:742px;top:229px;width:1px;height:19px;background:#fff"></div>
<div class="a" style="left:767px;top:226px;width:1px;height:24px;background:#b8b8b8"></div>
<div class="a" style="left:183px;top:251px;width:1009px;height:1px;background:#8a8a8a"></div>
<div class="a" style="left:183px;top:251px;width:153px;height:403px;background:#fff;border-top:1px solid #707070;border-left:1px solid #707070;border-right:1px solid #f8f8f8;border-bottom:1px solid #f8f8f8"></div>
<div class="a" style="left:340px;top:250px;width:852px;height:404px;border:2px solid #808080;border-right-color:#f8f8f8;border-bottom-color:#f8f8f8"></div>
<div class="a" style="left:342px;top:252px;width:848px;height:400px;background:#ababab;border-top:1px solid #c0c0c0;border-left:1px solid #c0c0c0"></div>
<div class="a" style="left:193px;top:262px;width:1px;height:240px;background:repeating-linear-gradient(#808080 0 1px,transparent 1px 2px)"></div>
<div class="a" style="left:212px;top:288px;width:1px;height:134px;background:repeating-linear-gradient(#808080 0 1px,transparent 1px 2px)"></div>
<div class="a" style="left:195px;top:261px;width:9px;height:1px;background:repeating-linear-gradient(90deg,#808080 0 1px,transparent 1px 2px)"></div>
<div class="a" style="left:195px;top:441px;width:9px;height:1px;background:repeating-linear-gradient(90deg,#808080 0 1px,transparent 1px 2px)"></div>
<div class="a" style="left:195px;top:461px;width:9px;height:1px;background:repeating-linear-gradient(90deg,#808080 0 1px,transparent 1px 2px)"></div>
<div class="a" style="left:195px;top:481px;width:9px;height:1px;background:repeating-linear-gradient(90deg,#808080 0 1px,transparent 1px 2px)"></div>
<div class="a" style="left:199px;top:281px;width:5px;height:1px;background:repeating-linear-gradient(90deg,#808080 0 1px,transparent 1px 2px)"></div>
<div class="a" style="left:199px;top:501px;width:5px;height:1px;background:repeating-linear-gradient(90deg,#808080 0 1px,transparent 1px 2px)"></div>
<div class="a" style="left:214px;top:301px;width:9px;height:1px;background:repeating-linear-gradient(90deg,#808080 0 1px,transparent 1px 2px)"></div>
<div class="a" style="left:214px;top:321px;width:9px;height:1px;background:repeating-linear-gradient(90deg,#808080 0 1px,transparent 1px 2px)"></div>
<div class="a" style="left:214px;top:341px;width:9px;height:1px;background:repeating-linear-gradient(90deg,#808080 0 1px,transparent 1px 2px)"></div>
<div class="a" style="left:214px;top:361px;width:9px;height:1px;background:repeating-linear-gradient(90deg,#808080 0 1px,transparent 1px 2px)"></div>
<div class="a" style="left:214px;top:381px;width:9px;height:1px;background:repeating-linear-gradient(90deg,#808080 0 1px,transparent 1px 2px)"></div>
<div class="a" style="left:214px;top:401px;width:9px;height:1px;background:repeating-linear-gradient(90deg,#808080 0 1px,transparent 1px 2px)"></div>
<div class="a" style="left:214px;top:421px;width:9px;height:1px;background:repeating-linear-gradient(90deg,#808080 0 1px,transparent 1px 2px)"></div>
<div class="a" style="left:189px;top:277px;width:9px;height:9px;border:1px solid #808080;background:#fff"></div><div class="a" style="left:191px;top:281px;width:5px;height:1px;background:#000"></div>
<div class="a" style="left:189px;top:497px;width:9px;height:9px;border:1px solid #808080;background:#fff"></div><div class="a" style="left:191px;top:501px;width:5px;height:1px;background:#000"></div><div class="a" style="left:193px;top:499px;width:1px;height:5px;background:#000"></div>
<svg class="a" style="left:204px;top:254px" width="16" height="16" viewBox="0 0 16 16"><path d="M3 0h6v4h7v6H9v6H3v-6H0V4h3z" fill="#000"/><path d="M4 1h4v4h7v4H8v6H4V9H1V5h3z" fill="#ffff00"/><path d="M2 7.5V5M4 7.5V5M6 7.5V5M8 7.5V5M10 7.5V5M12 7.5V5M14 7.5V5" stroke="#000" stroke-width=".8"/><path d="M7 2H5v2h2M7 11H5v3h2M5 12.5h2" stroke="#000" stroke-width=".8" fill="none"/></svg>
<div class="t" style="left:225px;top:256px;font-size:12px">点参数</div>
<svg class="a" style="left:204px;top:274px" width="16" height="16" viewBox="0 0 16 16"><rect x="0.5" y="5.5" width="11" height="10" fill="#fff" stroke="#000"/><path d="M1.5 13.5h9" stroke="#000"/><path d="M2 8.5h3M2 11h2M5 11h5" stroke="#000" stroke-width="1.3"/><path d="M3.5 10.5L8 2.5h5l1 2-2.5 2.5H9.5z" fill="#fff" stroke="#000"/><path d="M6 7l2 2M7.5 5l2 2M9 3.5l2 2" stroke="#000" stroke-width=".7"/><path d="M14 0h2v7l-2-2z" fill="#000090"/></svg>
<div class="t" style="left:225px;top:276px;font-size:12px">系统参数</div>
<svg class="a" style="left:223px;top:294px" width="16" height="16" viewBox="0 0 16 16"><rect x="0.5" y="5.5" width="11" height="10" fill="#fff" stroke="#000"/><path d="M1.5 13.5h9" stroke="#000"/><path d="M2 8.5h3M2 11h2M5 11h5" stroke="#000" stroke-width="1.3"/><path d="M3.5 10.5L8 2.5h5l1 2-2.5 2.5H9.5z" fill="#fff" stroke="#000"/><path d="M6 7l2 2M7.5 5l2 2M9 3.5l2 2" stroke="#000" stroke-width=".7"/><path d="M14 0h2v7l-2-2z" fill="#000090"/></svg>
<div class="t" style="left:244px;top:296px;font-size:12px">单位</div>
<svg class="a" style="left:223px;top:314px" width="16" height="16" viewBox="0 0 16 16"><rect x="0.5" y="5.5" width="11" height="10" fill="#fff" stroke="#000"/><path d="M1.5 13.5h9" stroke="#000"/><path d="M2 8.5h3M2 11h2M5 11h5" stroke="#000" stroke-width="1.3"/><path d="M3.5 10.5L8 2.5h5l1 2-2.5 2.5H9.5z" fill="#fff" stroke="#000"/><path d="M6 7l2 2M7.5 5l2 2M9 3.5l2 2" stroke="#000" stroke-width=".7"/><path d="M14 0h2v7l-2-2z" fill="#000090"/></svg>
<div class="t" style="left:244px;top:316px;font-size:12px">运行速度</div>
<svg class="a" style="left:223px;top:334px" width="16" height="16" viewBox="0 0 16 16"><rect x="0.5" y="5.5" width="11" height="10" fill="#fff" stroke="#000"/><path d="M1.5 13.5h9" stroke="#000"/><path d="M2 8.5h3M2 11h2M5 11h5" stroke="#000" stroke-width="1.3"/><path d="M3.5 10.5L8 2.5h5l1 2-2.5 2.5H9.5z" fill="#fff" stroke="#000"/><path d="M6 7l2 2M7.5 5l2 2M9 3.5l2 2" stroke="#000" stroke-width=".7"/><path d="M14 0h2v7l-2-2z" fill="#000090"/></svg>
<div class="t" style="left:244px;top:336px;font-size:12px">JOG速度</div>
<svg class="a" style="left:223px;top:354px" width="16" height="16" viewBox="0 0 16 16"><rect x="0.5" y="5.5" width="11" height="10" fill="#fff" stroke="#000"/><path d="M1.5 13.5h9" stroke="#000"/><path d="M2 8.5h3M2 11h2M5 11h5" stroke="#000" stroke-width="1.3"/><path d="M3.5 10.5L8 2.5h5l1 2-2.5 2.5H9.5z" fill="#fff" stroke="#000"/><path d="M6 7l2 2M7.5 5l2 2M9 3.5l2 2" stroke="#000" stroke-width=".7"/><path d="M14 0h2v7l-2-2z" fill="#000090"/></svg>
<div class="t" style="left:244px;top:356px;font-size:12px">原点复归</div>
<svg class="a" style="left:223px;top:374px" width="16" height="16" viewBox="0 0 16 16"><rect x="0.5" y="5.5" width="11" height="10" fill="#fff" stroke="#000"/><path d="M1.5 13.5h9" stroke="#000"/><path d="M2 8.5h3M2 11h2M5 11h5" stroke="#000" stroke-width="1.3"/><path d="M3.5 10.5L8 2.5h5l1 2-2.5 2.5H9.5z" fill="#fff" stroke="#000"/><path d="M6 7l2 2M7.5 5l2 2M9 3.5l2 2" stroke="#000" stroke-width=".7"/><path d="M14 0h2v7l-2-2z" fill="#000090"/></svg>
<div class="t" style="left:244px;top:376px;font-size:12px">输入信号</div>
<svg class="a" style="left:223px;top:394px" width="16" height="16" viewBox="0 0 16 16"><rect x="0.5" y="5.5" width="11" height="10" fill="#fff" stroke="#000"/><path d="M1.5 13.5h9" stroke="#000"/><path d="M2 8.5h3M2 11h2M5 11h5" stroke="#000" stroke-width="1.3"/><path d="M3.5 10.5L8 2.5h5l1 2-2.5 2.5H9.5z" fill="#fff" stroke="#000"/><path d="M6 7l2 2M7.5 5l2 2M9 3.5l2 2" stroke="#000" stroke-width=".7"/><path d="M14 0h2v7l-2-2z" fill="#000090"/></svg>
<div class="t" style="left:244px;top:396px;font-size:12px">其它设定</div>
<svg class="a" style="left:223px;top:414px" width="16" height="16" viewBox="0 0 16 16"><rect x="0.5" y="5.5" width="11" height="10" fill="#fff" stroke="#000"/><path d="M1.5 13.5h9" stroke="#000"/><path d="M2 8.5h3M2 11h2M5 11h5" stroke="#000" stroke-width="1.3"/><path d="M3.5 10.5L8 2.5h5l1 2-2.5 2.5H9.5z" fill="#fff" stroke="#000"/><path d="M6 7l2 2M7.5 5l2 2M9 3.5l2 2" stroke="#000" stroke-width=".7"/><path d="M14 0h2v7l-2-2z" fill="#000090"/></svg>
<div class="t" style="left:244px;top:416px;font-size:12px">全轴公共参数</div>
<svg class="a" style="left:204px;top:434px" width="16" height="16" viewBox="0 0 16 16"><g stroke="#000" fill="#fff" stroke-width="1"><rect x="1" y="4" width="6" height="8" rx="1" transform="rotate(-30 4 8)"/><rect x="5" y="3" width="6" height="8" rx="1" transform="rotate(-5 8 7)"/><rect x="9" y="3" width="6" height="8" rx="1" transform="rotate(25 12 7)"/></g><path d="M11 6l1.5 1.5L14 6" stroke="#e00000" stroke-width="1.2" fill="none"/></svg>
<div class="t" style="left:225px;top:436px;font-size:12px">速度参数</div>
<svg class="a" style="left:204px;top:454px" width="16" height="16" viewBox="0 0 16 16"><path d="M2 16h13V5" stroke="#777" fill="none"/><rect x="0.5" y="4.5" width="13" height="11" fill="#fff" stroke="#000"/><path d="M2.5 14V9.5l2.5 3 2.5-3V14" stroke="#f00000" stroke-width="1.4" fill="none"/><path d="M8 11l6-7 1.5 1.5-6 7-2.5 1z" fill="#30d030" stroke="#000" stroke-width=".8"/></svg>
<div class="t" style="left:225px;top:456px;font-size:12px">M代码注释</div>
<svg class="a" style="left:204px;top:474px" width="16" height="16" viewBox="0 0 16 16"><rect x="2" y="5" width="5" height="11" fill="#222" stroke="#000"/><rect x="5" y="3" width="5" height="11" fill="#333" stroke="#000"/><rect x="8" y="1" width="5" height="11" fill="#222" stroke="#000"/><path d="M3 6v9M5.5 6v9M9 2v9M11.5 2v9" stroke="#888" stroke-width=".6"/><rect x="4" y="7" width="3" height="3" fill="#ff00ff"/><rect x="10" y="3" width="1.5" height="4" fill="#ff00ff"/></svg>
<div class="t" style="left:225px;top:476px;font-size:12px">单元选择</div>
<svg class="a" style="left:204px;top:494px" width="16" height="16" viewBox="0 0 16 16"><path d="M0.5 3.5h5l1 2h8v10h-14z" fill="#f8f870" stroke="#000"/><path d="M1 6h14" stroke="#000" stroke-width=".6"/><path d="M2 8h12M2 10h12M2 12h12M2 14h12" stroke="#d8d840" stroke-width=".8" stroke-dasharray="1 1"/></svg>
<div class="t" style="left:225px;top:496px;font-size:12px">工具</div>
<div class="a" style="left:343px;top:253px;width:352px;height:152px;background:#fff;border-right:2px solid #6a6a6a;border-bottom:2px solid #6a6a6a"></div>
<div class="a" style="left:343px;top:253px;width:351px;height:15px;background:#efefef"></div>
<div class="a" style="left:343px;top:268px;width:85px;height:136px;background:#efefef"></div>
<div class="a" style="left:428px;top:268px;width:265px;height:15px;background:#f4f4dc"></div>
<div class="a" style="left:343px;top:268px;width:85px;height:1px;background:#a0a0a0"></div><div class="a" style="left:343px;top:269px;width:85px;height:1px;background:#fff"></div>
<div class="a" style="left:343px;top:283px;width:85px;height:1px;background:#a0a0a0"></div><div class="a" style="left:343px;top:284px;width:85px;height:1px;background:#fff"></div>
<div class="a" style="left:343px;top:298px;width:85px;height:1px;background:#a0a0a0"></div><div class="a" style="left:343px;top:299px;width:85px;height:1px;background:#fff"></div>
<div class="a" style="left:428px;top:298px;width:265px;height:1px;background:#ececec"></div>
<div class="a" style="left:343px;top:313px;width:85px;height:1px;background:#a0a0a0"></div><div class="a" style="left:343px;top:314px;width:85px;height:1px;background:#fff"></div>
<div class="a" style="left:428px;top:313px;width:265px;height:1px;background:#ececec"></div>
<div class="a" style="left:343px;top:328px;width:85px;height:1px;background:#a0a0a0"></div><div class="a" style="left:343px;top:329px;width:85px;height:1px;background:#fff"></div>
<div class="a" style="left:428px;top:328px;width:265px;height:1px;background:#ececec"></div>
<div class="a" style="left:343px;top:343px;width:85px;height:1px;background:#a0a0a0"></div><div class="a" style="left:343px;top:344px;width:85px;height:1px;background:#fff"></div>
<div class="a" style="left:428px;top:343px;width:265px;height:1px;background:#ececec"></div>
<div class="a" style="left:343px;top:358px;width:85px;height:1px;background:#a0a0a0"></div><div class="a" style="left:343px;top:359px;width:85px;height:1px;background:#fff"></div>
<div class="a" style="left:428px;top:358px;width:265px;height:1px;background:#ececec"></div>
<div class="a" style="left:343px;top:373px;width:85px;height:1px;background:#a0a0a0"></div><div class="a" style="left:343px;top:374px;width:85px;height:1px;background:#fff"></div>
<div class="a" style="left:428px;top:373px;width:265px;height:1px;background:#ececec"></div>
<div class="a" style="left:343px;top:388px;width:85px;height:1px;background:#a0a0a0"></div><div class="a" style="left:343px;top:389px;width:85px;height:1px;background:#fff"></div>
<div class="a" style="left:428px;top:388px;width:265px;height:1px;background:#ececec"></div>
<div class="a" style="left:343px;top:403px;width:85px;height:1px;background:#a0a0a0"></div><div class="a" style="left:343px;top:404px;width:85px;height:1px;background:#fff"></div>
<div class="a" style="left:428px;top:403px;width:265px;height:1px;background:#ececec"></div>
<div class="a" style="left:428px;top:268px;width:265px;height:1px;background:#a0a0a0"></div>
<div class="a" style="left:428px;top:269px;width:265px;height:1px;background:#fff"></div>
<div class="a" style="left:427px;top:253px;width:1px;height:151px;background:#a0a0a0"></div><div class="a" style="left:428px;top:253px;width:1px;height:15px;background:#fff"></div>
<div class="a" style="left:560px;top:253px;width:1px;height:15px;background:#a0a0a0"></div><div class="a" style="left:561px;top:253px;width:1px;height:15px;background:#fff"></div>
<div class="a" style="left:560px;top:283px;width:1px;height:121px;background:#ececec"></div>
<div class="a" style="left:343px;top:253px;width:1px;height:151px;background:#fff"></div>
<div class="t" style="left:428px;top:256px;width:132px;text-align:center;font-size:12px;font-family:'Liberation Serif',serif">X1轴</div>
<div class="t" style="left:561px;top:256px;width:132px;text-align:center;font-size:12px;font-family:'Liberation Serif',serif">Y1轴</div>
<div class="t" style="left:431px;top:270px;font-size:12px;font-weight:bold">运行速度</div>
<div class="t" style="left:346px;top:285px;font-size:12px">起动速度</div>
<div class="t" style="left:430px;top:286px;font-size:11px;">0</div>
<div class="t" style="left:563px;top:286px;font-size:11px;">0</div>
<div class="t" style="left:346px;top:300px;font-size:12px">最高速度</div>
<div class="t" style="left:430px;top:301px;font-size:11px;">500000</div>
<div class="t" style="left:563px;top:301px;font-size:11px;">500000</div>
<div class="t" style="left:346px;top:315px;font-size:12px">加速度</div>
<div class="t" style="left:430px;top:316px;font-size:11px;">10</div>
<div class="t" style="left:563px;top:316px;font-size:11px;">10</div>
<div class="t" style="left:346px;top:330px;font-size:12px">加速曲线</div>
<div class="t" style="left:430px;top:331px;font-size:11px;font-family:'Liberation Mono',monospace;">SIN</div>
<div class="t" style="left:563px;top:331px;font-size:11px;font-family:'Liberation Mono',monospace;">SIN</div>
<div class="t" style="left:346px;top:345px;font-size:12px"><m>S </m>形加速斜率</div>
<div class="t" style="left:430px;top:346px;font-size:11px;">100</div>
<div class="t" style="left:563px;top:346px;font-size:11px;">100</div>
<div class="t" style="left:346px;top:360px;font-size:12px">减速度</div>
<div class="t" style="left:430px;top:361px;font-size:11px;">10</div>
<div class="t" style="left:563px;top:361px;font-size:11px;">10</div>
<div class="t" style="left:346px;top:375px;font-size:12px">减速曲线</div>
<div class="t" style="left:430px;top:376px;font-size:11px;font-family:'Liberation Mono',monospace;">SIN</div>
<div class="t" style="left:563px;top:376px;font-size:11px;font-family:'Liberation Mono',monospace;">SIN</div>
<div class="t" style="left:346px;top:390px;font-size:12px"><m>S </m>形减速斜率</div>
<div class="t" style="left:430px;top:391px;font-size:11px;">100</div>
<div class="t" style="left:563px;top:391px;font-size:11px;">100</div>
<div class="a" style="left:428px;top:343px;width:132px;height:16px;border:1px dotted #333"></div>
<div class="a" style="left:183px;top:656px;width:1009px;height:1px;background:#a0a0a0"></div>
<div class="a" style="left:183px;top:657px;width:1009px;height:16px;background:#efefef"></div>
<div class="a" style="left:183px;top:673px;width:1009px;height:1px;background:#fff"></div>
<div class="a" style="left:183px;top:674px;width:1009px;height:19px;background:#efefef"></div>
<div class="t" style="left:185px;top:678px;font-size:12px">准备</div>
<div class="a" style="left:1031px;top:676px;width:34px;height:16px;border:1px solid #a0a0a0;border-right-color:#fff;border-bottom-color:#fff"></div>
<div class="a" style="left:1068px;top:676px;width:28px;height:16px;border:1px solid #a0a0a0;border-right-color:#fff;border-bottom-color:#fff"></div>
<div class="t" style="left:1070px;top:678px;font-size:12px">CAP</div>
<div class="a" style="left:1099px;top:676px;width:36px;height:16px;border:1px solid #a0a0a0;border-right-color:#fff;border-bottom-color:#fff"></div>
<div class="t" style="left:1101px;top:678px;font-size:12px">NUM</div>
<div class="a" style="left:1138px;top:676px;width:34px;height:16px;border:1px solid #a0a0a0;border-right-color:#fff;border-bottom-color:#fff"></div>
<svg class="a" style="left:1178px;top:678px" width="14" height="14" viewBox="0 0 14 14"><path d="M13 2L2 13M13 6L6 13M13 10l-3 3" stroke="#999" stroke-width="1.2"/><path d="M14 3L3 14M14 7L7 14M14 11l-3 3" stroke="#fff"/></svg>
</body></html>
